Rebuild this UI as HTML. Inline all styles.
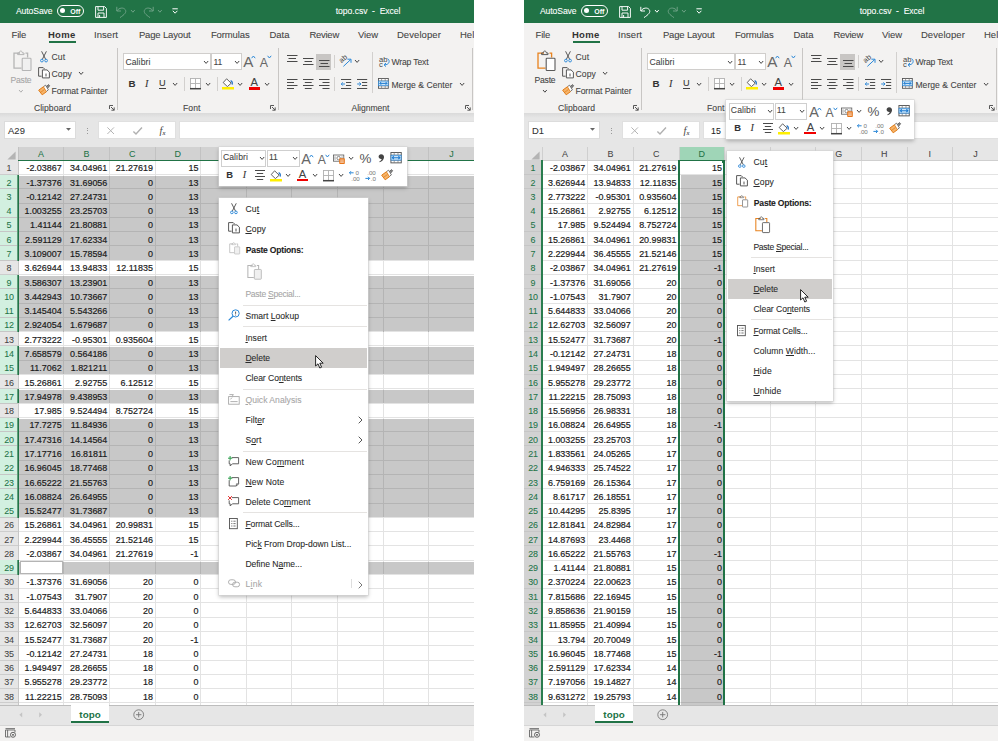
<!DOCTYPE html>
<html lang="en"><head><meta charset="utf-8"><title>topo.csv - Excel</title>
<style>
html,body{margin:0;padding:0;background:#fff}
body{width:999px;height:741px;overflow:hidden;position:relative;font-family:'Liberation Sans',sans-serif;color:#444}
.win{position:absolute;top:0;height:741px;overflow:hidden;background:#fff}
.sec{position:absolute;left:0;top:0;width:474px;height:741px}
.b{position:absolute;display:block}
svg.b{overflow:visible}
.t{position:absolute;white-space:nowrap;line-height:1;display:block;-webkit-text-stroke:0.08px currentColor}
.t u{text-decoration:underline;text-decoration-thickness:0.8px;text-underline-offset:1px}
.c{font-size:8.95px;color:#1a1a1a;-webkit-text-stroke:0.18px currentColor}
.pop{background:#fff;box-shadow:0 0 0 0.6px #d4d4d4,0 1.5px 4px rgba(0,0,0,.28)}
</style></head>
<body>
<div class="win win-left" style="left:0px;width:474px">
<div class="sec titlebar">
<div class="b " style="left:0.00px;top:0.00px;width:475.00px;height:23.00px;background:#217346"></div>
<span class="t" style="top:7.47px;font-size:8.60px;color:#fff;letter-spacing:-0.094px;left:15.94px">AutoSave</span>
<div class="b " style="left:57.00px;top:5.00px;width:27.00px;height:11.60px;border:1px solid #fff;border-radius:6px;box-sizing:border-box"></div>
<div class="b " style="left:60.20px;top:8.40px;width:5.00px;height:5.00px;background:#fff;border-radius:50%"></div>
<span class="t" style="top:7.92px;font-size:7.00px;color:#fff;font-weight:bold;-webkit-text-stroke:0px currentColor;letter-spacing:-0.090px;left:70.34px">Off</span>
<svg class="b" style="left:94.80px;top:5.90px;" width="12" height="12" viewBox="0 0 12 12"><path d="M0.6 0.6 H9.6 L11.4 2.4 V11.4 H0.6 Z M3 0.6 V4.2 H8.6 V0.6 M3 11.4 V7 H9 V11.4 M4.6 11.4 V9" fill="none" stroke="#fff" stroke-width="0.95"/></svg>
<svg class="b" style="left:115.80px;top:6.40px;" width="11" height="12" viewBox="0 0 11 12"><path d="M0.8 0.8 V5 H5 M0.9 4.9 C3.2 1.6 7.4 1.2 9.2 3.6 C11 6.2 8.4 8.6 4 11.6" fill="none" stroke="#6ea286" stroke-width="1"/></svg>
<svg class="b" style="left:129.60px;top:8.80px;" width="5.8" height="4.2" viewBox="0 0 5.8 4.2"><path d="M1 1 L2.9 3.2 L4.8 1" fill="none" stroke="#6ea286" stroke-width="1"/></svg>
<svg class="b" style="left:143.20px;top:6.40px;" width="11" height="12" viewBox="0 0 11 12"><path d="M10.2 0.8 V5 H6 M10.1 4.9 C7.8 1.6 3.6 1.2 1.8 3.6 C0 6.2 2.6 8.6 7 11.6" fill="none" stroke="#6ea286" stroke-width="1"/></svg>
<svg class="b" style="left:156.60px;top:8.80px;" width="5.8" height="4.2" viewBox="0 0 5.8 4.2"><path d="M1 1 L2.9 3.2 L4.8 1" fill="none" stroke="#6ea286" stroke-width="1"/></svg>
<svg class="b" style="left:172.20px;top:8.40px;" width="6.4" height="6.4" viewBox="0 0 6.4 6.4"><path d="M0.4 0.8 H5.8" stroke="#fff" stroke-width="1"/><path d="M0.8 2.8 L3.1 5.2 L5.4 2.8" fill="none" stroke="#fff" stroke-width="1"/></svg>
<span class="t" style="top:7.47px;font-size:8.60px;color:#fff;letter-spacing:-0.039px;left:335.74px">topo.csv&nbsp; -&nbsp; Excel</span>
</div>
<div class="sec ribbon">
<div class="b " style="left:0.00px;top:23.00px;width:475.00px;height:90.00px;background:#f3f2f1"></div>
<span class="t" style="top:30.21px;font-size:9.50px;letter-spacing:-0.218px;left:11.58px">File</span>
<span class="t" style="top:30.21px;font-size:9.50px;letter-spacing:0.029px;left:94.08px">Insert</span>
<span class="t" style="top:30.21px;font-size:9.50px;letter-spacing:-0.156px;left:138.88px">Page Layout</span>
<span class="t" style="top:30.21px;font-size:9.50px;letter-spacing:-0.119px;left:210.88px">Formulas</span>
<span class="t" style="top:30.21px;font-size:9.50px;letter-spacing:0.015px;left:269.38px">Data</span>
<span class="t" style="top:30.21px;font-size:9.50px;letter-spacing:-0.253px;left:309.38px">Review</span>
<span class="t" style="top:30.21px;font-size:9.50px;letter-spacing:-0.070px;left:357.88px">View</span>
<span class="t" style="top:30.21px;font-size:9.50px;letter-spacing:0.092px;left:396.88px">Developer</span>
<span class="t" style="top:30.21px;font-size:9.50px;left:460.00px">Help</span>
<span class="t" style="top:30.21px;font-size:9.50px;color:#333;font-weight:bold;-webkit-text-stroke:0px currentColor;letter-spacing:0.308px;left:47.88px">Home</span>
<div class="b " style="left:48.50px;top:40.80px;width:27.00px;height:2.60px;background:#217346"></div>
<svg class="b" style="left:13.00px;top:50.40px;" width="19" height="21.5" viewBox="0 0 19 21.5"><path d="M7 3.2 H1 V18.2 H8.5" fill="none" stroke="#b5b5b5" stroke-width="1.3"/><path d="M12.5 3.2 H14.6 V7.5" fill="none" stroke="#b5b5b5" stroke-width="1.3"/><path d="M4.6 4.6 V3 H6.2 C6.2 0.4 9.4 0.4 9.4 3 H11 V4.6 Z" fill="none" stroke="#b5b5b5" stroke-width="1"/><rect x="9.2" y="8.2" width="8.8" height="12.3" rx="0.8" fill="#f0f0f0" stroke="#b5b5b5" stroke-width="1.1"/></svg>
<span class="t" style="top:75.77px;font-size:8.60px;color:#a6a6a6;letter-spacing:-0.190px;left:10.44px">Paste</span>
<svg class="b" style="left:17.60px;top:88.60px;" width="5.8" height="4.2" viewBox="0 0 5.8 4.2"><path d="M1 1 L2.9 3.2 L4.8 1" fill="none" stroke="#b0b0b0" stroke-width="1"/></svg>
<svg class="b" style="left:39.50px;top:50.50px;" width="8" height="11.5" viewBox="0 0 8 11.5"><path d="M1.6 0.3 L5.6 8.2 M6.4 0.3 L2.4 8.2" stroke="#505050" stroke-width="0.95" fill="none"/><circle cx="1.9" cy="9.6" r="1.35" fill="none" stroke="#2b88d8" stroke-width="0.95"/><circle cx="6.1" cy="9.6" r="1.35" fill="none" stroke="#2b88d8" stroke-width="0.95"/></svg>
<span class="t" style="top:52.67px;font-size:8.60px;letter-spacing:0.219px;left:51.44px">Cut</span>
<svg class="b" style="left:37.50px;top:67.00px;" width="12" height="11.5" viewBox="0 0 12 11.5"><path d="M3.6 9.2 H0.6 V0.6 H5.2 L6.6 2.0" fill="none" stroke="#505050" stroke-width="0.95"/><path d="M4.4 2.9 H9.0 L11.4 5.2 V10.9 H4.4 Z" fill="#fff" stroke="#505050" stroke-width="0.95"/><path d="M7 7.2 H9 M7 8.8 H9" stroke="#505050" stroke-width="0.7"/></svg>
<span class="t" style="top:70.17px;font-size:8.60px;letter-spacing:0.117px;left:51.44px">Copy</span>
<svg class="b" style="left:78.00px;top:70.80px;" width="6.2" height="4.4" viewBox="0 0 6.2 4.4"><path d="M1 1 L3.1 3.4 L5.2 1" fill="none" stroke="#444" stroke-width="1"/></svg>
<svg class="b" style="left:37.80px;top:83.80px;" width="12" height="11.5" viewBox="0 0 12 11.5"><path d="M0.7 6.2 L5.6 2.6 L8.6 7.6 L4.2 10.8 Z" fill="#f6b46a" stroke="#e07a14" stroke-width="1" stroke-linejoin="round"/><path d="M2.6 8.4 L6.6 5.4" stroke="#e07a14" stroke-width="0.7"/><path d="M5.8 2.4 L7.6 1.2 L10.4 5.8 L8.6 7.2" fill="#fff" stroke="#555" stroke-width="0.8"/><path d="M8.4 2.4 L10.6 0.6 L11.6 1.8 L9.6 4.2" fill="#888" stroke="#555" stroke-width="0.8"/></svg>
<span class="t" style="top:86.77px;font-size:8.60px;letter-spacing:-0.058px;left:51.44px">Format Painter</span>
<span class="t" style="top:103.87px;font-size:8.60px;letter-spacing:0.026px;left:33.94px">Clipboard</span>
<svg class="b" style="left:109.00px;top:105.00px;" width="5.8" height="5.8" viewBox="0 0 5.8 5.8"><path d="M0.5 4 V0.5 H4" fill="none" stroke="#555" stroke-width="1"/><path d="M2 2 L5.2 5.2 M5.2 2.4 V5.2 H2.4" fill="none" stroke="#555" stroke-width="1"/></svg>
<div class="b " style="left:117.00px;top:48.00px;width:1.00px;height:62.00px;background:#c8c6c4"></div>
<div class="b " style="left:123.00px;top:53.00px;width:87.50px;height:16.60px;background:#fff;border:1px solid #d0cecc;box-sizing:border-box"></div>
<div class="b " style="left:211.20px;top:53.00px;width:30.40px;height:16.60px;background:#fff;border:1px solid #d0cecc;box-sizing:border-box"></div>
<span class="t" style="top:57.87px;font-size:8.60px;letter-spacing:0.096px;left:125.44px">Calibri</span>
<svg class="b" style="left:203.00px;top:60.00px;" width="6.2" height="4.4" viewBox="0 0 6.2 4.4"><path d="M1 1 L3.1 3.4 L5.2 1" fill="none" stroke="#444" stroke-width="1"/></svg>
<span class="t" style="top:57.87px;font-size:8.60px;left:213.40px">11</span>
<svg class="b" style="left:234.00px;top:60.00px;" width="6.2" height="4.4" viewBox="0 0 6.2 4.4"><path d="M1 1 L3.1 3.4 L5.2 1" fill="none" stroke="#444" stroke-width="1"/></svg>
<span class="t" style="top:54.48px;font-size:15.20px;color:#666;-webkit-text-stroke:0px currentColor;left:243.30px">A</span>
<svg class="b" style="left:251.00px;top:55.40px;" width="5" height="4" viewBox="0 0 5 4"><path d="M0.6 3.2 L2.4 1 L4.2 3.2" fill="none" stroke="#2b88d8" stroke-width="1"/></svg>
<span class="t" style="top:57.05px;font-size:12.40px;color:#666;-webkit-text-stroke:0px currentColor;left:259.80px">A</span>
<svg class="b" style="left:267.00px;top:55.40px;" width="5" height="4" viewBox="0 0 5 4"><path d="M0.6 0.8 L2.4 3 L4.2 0.8" fill="none" stroke="#2b88d8" stroke-width="1"/></svg>
<span class="t" style="top:78.75px;font-size:9.80px;color:#333;font-weight:bold;left:128.50px">B</span>
<span class="t" style="top:78.52px;font-size:10.20px;color:#333;font-style:italic;font-family:'Liberation Serif',serif;left:145.00px">I</span>
<span class="t" style="top:79.06px;font-size:9.20px;color:#333;left:159.00px">U</span>
<div class="b " style="left:159.00px;top:87.60px;width:6.60px;height:0.90px;background:#444"></div>
<svg class="b" style="left:172.00px;top:82.20px;" width="6.2" height="4.4" viewBox="0 0 6.2 4.4"><path d="M1 1 L3.1 3.4 L5.2 1" fill="none" stroke="#444" stroke-width="1"/></svg>
<div class="b " style="left:184.00px;top:77.00px;width:1.00px;height:14.00px;background:#d2d0ce"></div>
<svg class="b" style="left:189.50px;top:78.00px;" width="11" height="11.5" viewBox="0 0 11 11.5"><rect x="0.5" y="0.5" width="10" height="10" fill="#fff" stroke="#b0b0b0" stroke-width="0.9"/><path d="M5.5 0.5 V10.5 M0.5 5.5 H10.5" stroke="#b0b0b0" stroke-width="0.9"/><path d="M0 10.7 H11" stroke="#444" stroke-width="1.5"/></svg>
<svg class="b" style="left:204.60px;top:82.20px;" width="6.2" height="4.4" viewBox="0 0 6.2 4.4"><path d="M1 1 L3.1 3.4 L5.2 1" fill="none" stroke="#444" stroke-width="1"/></svg>
<div class="b " style="left:217.00px;top:77.00px;width:1.00px;height:14.00px;background:#d2d0ce"></div>
<svg class="b" style="left:222.20px;top:78.00px;" width="12" height="11.5" viewBox="0 0 12 11.5"><path d="M4.6 0.8 L9.2 5.2 L5.4 8.6 L1.2 4.6 Z" fill="#fff" stroke="#505050" stroke-width="0.9"/><path d="M8.6 2.6 C10.2 3.2 10.6 5 10.2 6.6" fill="none" stroke="#2b78c8" stroke-width="1.2"/><rect x="0" y="9" width="12" height="2.5" fill="#ffef00"/></svg>
<svg class="b" style="left:237.20px;top:82.20px;" width="6.2" height="4.4" viewBox="0 0 6.2 4.4"><path d="M1 1 L3.1 3.4 L5.2 1" fill="none" stroke="#444" stroke-width="1"/></svg>
<span class="t" style="top:77.07px;font-size:11.20px;left:250.60px">A</span>
<div class="b " style="left:248.50px;top:87.00px;width:11.60px;height:2.60px;background:#f00000"></div>
<svg class="b" style="left:264.00px;top:82.20px;" width="6.2" height="4.4" viewBox="0 0 6.2 4.4"><path d="M1 1 L3.1 3.4 L5.2 1" fill="none" stroke="#444" stroke-width="1"/></svg>
<span class="t" style="top:103.87px;font-size:8.60px;letter-spacing:0.082px;left:182.94px">Font</span>
<svg class="b" style="left:270.00px;top:105.00px;" width="5.8" height="5.8" viewBox="0 0 5.8 5.8"><path d="M0.5 4 V0.5 H4" fill="none" stroke="#555" stroke-width="1"/><path d="M2 2 L5.2 5.2 M5.2 2.4 V5.2 H2.4" fill="none" stroke="#555" stroke-width="1"/></svg>
<div class="b " style="left:278.00px;top:48.00px;width:1.00px;height:62.00px;background:#c8c6c4"></div>
<svg class="b" style="left:287.00px;top:55.00px;" width="12" height="12" viewBox="0 0 12 12"><path d="M0 0.5 H10.5 M1.5 3.5 H9 M0 6.5 H10.5" stroke="#4a4a4a" stroke-width="1" fill="none"/></svg>
<svg class="b" style="left:303.00px;top:58.00px;" width="12" height="12" viewBox="0 0 12 12"><path d="M0 0.5 H10.5 M1.5 3.5 H9 M0 6.5 H10.5" stroke="#4a4a4a" stroke-width="1" fill="none"/></svg>
<div class="b " style="left:316.00px;top:53.50px;width:15.40px;height:16.00px;background:#c8c6c4"></div>
<svg class="b" style="left:318.50px;top:60.00px;" width="12" height="12" viewBox="0 0 12 12"><path d="M0 0.5 H10.5 M1.5 3.5 H9 M0 6.5 H10.5" stroke="#4a4a4a" stroke-width="1" fill="none"/></svg>
<div class="b " style="left:334.00px;top:55.00px;width:1.00px;height:13.00px;background:#d2d0ce"></div>
<svg class="b" style="left:340.00px;top:55.40px;" width="12.5" height="12" viewBox="0 0 12.5 12"><text x="0" y="0" font-size="7.4" font-family="Liberation Sans,sans-serif" fill="#444" transform="translate(1.6 8.2) rotate(-42)">ab</text><path d="M3.4 11.4 L10.6 4.6 M7.4 4.2 H11 V7.8" fill="none" stroke="#2b88d8" stroke-width="1"/></svg>
<svg class="b" style="left:354.00px;top:59.40px;" width="6.2" height="4.4" viewBox="0 0 6.2 4.4"><path d="M1 1 L3.1 3.4 L5.2 1" fill="none" stroke="#444" stroke-width="1"/></svg>
<svg class="b" style="left:287.00px;top:79.00px;" width="12" height="12" viewBox="0 0 12 12"><path d="M0 0.5 H10.5 M0 3.5 H7 M0 6.5 H10.5 M0 9.5 H7" stroke="#4a4a4a" stroke-width="1" fill="none"/></svg>
<svg class="b" style="left:303.00px;top:79.00px;" width="12" height="12" viewBox="0 0 12 12"><path d="M0 0.5 H10.5 M1.8 3.5 H8.7 M0 6.5 H10.5 M1.8 9.5 H8.7" stroke="#4a4a4a" stroke-width="1" fill="none"/></svg>
<svg class="b" style="left:318.50px;top:79.00px;" width="12" height="12" viewBox="0 0 12 12"><path d="M0 0.5 H10.5 M3.5 3.5 H10.5 M0 6.5 H10.5 M3.5 9.5 H10.5" stroke="#4a4a4a" stroke-width="1" fill="none"/></svg>
<div class="b " style="left:334.00px;top:77.00px;width:1.00px;height:14.00px;background:#d2d0ce"></div>
<svg class="b" style="left:340.50px;top:79.00px;" width="10.6" height="10.6" viewBox="0 0 10.6 10.6"><path d="M0 0.5 H10.2 M5 3.5 H10.2 M5 6.5 H10.2 M0 9.5 H10.2" stroke="#4a4a4a" stroke-width="1" fill="none"/><path d="M0.4 5 H4 M1.8 3.4 L0.2 5 L1.8 6.6" fill="none" stroke="#2b88d8" stroke-width="1"/></svg>
<svg class="b" style="left:356.50px;top:79.00px;" width="10.6" height="10.6" viewBox="0 0 10.6 10.6"><path d="M0 0.5 H10.2 M5 3.5 H10.2 M5 6.5 H10.2 M0 9.5 H10.2" stroke="#4a4a4a" stroke-width="1" fill="none"/><path d="M0.2 5 H3.8 M2.4 3.4 L4 5 L2.4 6.6" fill="none" stroke="#2b88d8" stroke-width="1"/></svg>
<div class="b " style="left:372.00px;top:52.00px;width:1.00px;height:41.00px;background:#d2d0ce"></div>
<svg class="b" style="left:377.60px;top:55.60px;" width="12.5" height="11.5" viewBox="0 0 12.5 11.5"><text x="1.0" y="5.8" font-size="7.6" font-family="Liberation Sans,sans-serif" fill="#444">ab</text><text x="1.0" y="11.2" font-size="7.6" font-family="Liberation Sans,sans-serif" fill="#444">c</text><path d="M9.6 2.6 C12.4 4.4 11.4 9 6.4 8.8 M8 7 L6 8.8 L8 10.6" fill="none" stroke="#2b88d8" stroke-width="1"/></svg>
<span class="t" style="top:58.27px;font-size:8.60px;letter-spacing:-0.149px;left:391.44px">Wrap Text</span>
<svg class="b" style="left:378.00px;top:78.40px;" width="10.8" height="10.8" viewBox="0 0 10.8 10.8"><rect x="0.5" y="0.5" width="9.8" height="9.8" fill="#fff" stroke="#555" stroke-width="0.9"/><path d="M0.5 2.9 H10.3 M0.5 7.9 H10.3 M3.6 0.5 V2.9 M7.2 0.5 V2.9 M3.6 7.9 V10.3 M7.2 7.9 V10.3" stroke="#777" stroke-width="0.7"/><rect x="0.6" y="3.1" width="9.6" height="4.6" fill="#cfe6f8" stroke="#2b88d8" stroke-width="0.7"/><path d="M1.8 5.4 H9 M3.2 4 L1.8 5.4 L3.2 6.8 M7.6 4 L9 5.4 L7.6 6.8" fill="none" stroke="#1f7bd0" stroke-width="1"/></svg>
<span class="t" style="top:80.77px;font-size:8.60px;letter-spacing:0.026px;left:391.44px">Merge &amp; Center</span>
<svg class="b" style="left:458.60px;top:82.20px;" width="6.2" height="4.4" viewBox="0 0 6.2 4.4"><path d="M1 1 L3.1 3.4 L5.2 1" fill="none" stroke="#444" stroke-width="1"/></svg>
<span class="t" style="top:103.87px;font-size:8.60px;letter-spacing:-0.021px;left:351.44px">Alignment</span>
<svg class="b" style="left:465.00px;top:105.00px;" width="5.8" height="5.8" viewBox="0 0 5.8 5.8"><path d="M0.5 4 V0.5 H4" fill="none" stroke="#555" stroke-width="1"/><path d="M2 2 L5.2 5.2 M5.2 2.4 V5.2 H2.4" fill="none" stroke="#555" stroke-width="1"/></svg>
<div class="b " style="left:472.00px;top:48.00px;width:1.00px;height:62.00px;background:#c8c6c4"></div>
</div>
<div class="sec formulabar">
<div class="b " style="left:0.00px;top:113.00px;width:475.00px;height:5.00px;background:linear-gradient(#dadada,#e6e6e6)"></div>
<div class="b " style="left:0.00px;top:118.00px;width:475.00px;height:29.50px;background:#e6e6e6"></div>
<div class="b " style="left:3.50px;top:121.30px;width:72.50px;height:18.20px;background:#fff;border:1px solid #dcdcdc;box-sizing:border-box"></div>
<span class="t" style="top:126.39px;font-size:9.40px;color:#333;letter-spacing:0.147px;left:7.89px">A29</span>
<svg class="b" style="left:66.30px;top:128.40px;" width="5" height="3" viewBox="0 0 5 3"><path d="M0 0 H5 L2.5 2.8 Z" fill="#666"/></svg>
<div class="b " style="left:86.60px;top:127.60px;width:1.00px;height:1.00px;background:#999"></div>
<div class="b " style="left:86.60px;top:130.40px;width:1.00px;height:1.00px;background:#999"></div>
<div class="b " style="left:86.60px;top:133.20px;width:1.00px;height:1.00px;background:#999"></div>
<div class="b " style="left:97.50px;top:121.30px;width:78.30px;height:18.20px;background:#fff;border:1px solid #e0e0e0;box-sizing:border-box"></div>
<svg class="b" style="left:107.40px;top:127.40px;" width="7.4" height="7.4" viewBox="0 0 7.4 7.4"><path d="M0.4 0.4 L7 7 M7 0.4 L0.4 7" stroke="#b4b4b4" stroke-width="1"/></svg>
<svg class="b" style="left:133.00px;top:127.20px;" width="9.4" height="7.6" viewBox="0 0 9.4 7.6"><path d="M0.4 4.4 L3 7 L9 0.5" fill="none" stroke="#b0b0b0" stroke-width="1.4"/></svg>
<span class="t" style="top:125.75px;font-size:10.40px;font-family:'Liberation Serif',serif;-webkit-text-stroke:0px currentColor;left:159.40px"><i>f</i></span>
<span class="t" style="top:129.96px;font-size:6.60px;font-family:'Liberation Serif',serif;-webkit-text-stroke:0.1px currentColor;left:162.60px"><i>x</i></span>
<div class="b " style="left:178.50px;top:121.30px;width:300.00px;height:18.20px;background:#fff;border:1px solid #e0e0e0;box-sizing:border-box"></div>
</div>
<div class="sec grid">
<div class="b " style="left:0.00px;top:147.00px;width:475.00px;height:558.00px;background:#fff"></div>
<div class="b " style="left:19.20px;top:176.08px;width:475.00px;height:84.18px;background:#c8c8c8"></div>
<div class="b " style="left:19.20px;top:276.04px;width:475.00px;height:55.62px;background:#c8c8c8"></div>
<div class="b " style="left:19.20px;top:347.44px;width:475.00px;height:27.06px;background:#c8c8c8"></div>
<div class="b " style="left:19.20px;top:390.28px;width:475.00px;height:12.78px;background:#c8c8c8"></div>
<div class="b " style="left:19.20px;top:418.84px;width:475.00px;height:98.46px;background:#c8c8c8"></div>
<div class="b " style="left:19.20px;top:561.64px;width:475.00px;height:12.78px;background:#c8c8c8"></div>
<div class="b " style="left:63.30px;top:161.00px;width:1.00px;height:544.00px;background:#e3e3e3"></div>
<div class="b " style="left:108.90px;top:161.00px;width:1.00px;height:544.00px;background:#e3e3e3"></div>
<div class="b " style="left:154.50px;top:161.00px;width:1.00px;height:544.00px;background:#e3e3e3"></div>
<div class="b " style="left:200.10px;top:161.00px;width:1.00px;height:544.00px;background:#e3e3e3"></div>
<div class="b " style="left:245.70px;top:161.00px;width:1.00px;height:544.00px;background:#e3e3e3"></div>
<div class="b " style="left:291.30px;top:161.00px;width:1.00px;height:544.00px;background:#e3e3e3"></div>
<div class="b " style="left:336.90px;top:161.00px;width:1.00px;height:544.00px;background:#e3e3e3"></div>
<div class="b " style="left:382.50px;top:161.00px;width:1.00px;height:544.00px;background:#e3e3e3"></div>
<div class="b " style="left:428.10px;top:161.00px;width:1.00px;height:544.00px;background:#e3e3e3"></div>
<div class="b " style="left:473.70px;top:161.00px;width:1.00px;height:544.00px;background:#e3e3e3"></div>
<div class="b " style="left:18.20px;top:174.08px;width:475.00px;height:1.00px;background:#e3e3e3"></div>
<div class="b " style="left:18.20px;top:188.36px;width:475.00px;height:1.00px;background:#e3e3e3"></div>
<div class="b " style="left:18.20px;top:202.64px;width:475.00px;height:1.00px;background:#e3e3e3"></div>
<div class="b " style="left:18.20px;top:216.92px;width:475.00px;height:1.00px;background:#e3e3e3"></div>
<div class="b " style="left:18.20px;top:231.20px;width:475.00px;height:1.00px;background:#e3e3e3"></div>
<div class="b " style="left:18.20px;top:245.48px;width:475.00px;height:1.00px;background:#e3e3e3"></div>
<div class="b " style="left:18.20px;top:259.76px;width:475.00px;height:1.00px;background:#e3e3e3"></div>
<div class="b " style="left:18.20px;top:274.04px;width:475.00px;height:1.00px;background:#e3e3e3"></div>
<div class="b " style="left:18.20px;top:288.32px;width:475.00px;height:1.00px;background:#e3e3e3"></div>
<div class="b " style="left:18.20px;top:302.60px;width:475.00px;height:1.00px;background:#e3e3e3"></div>
<div class="b " style="left:18.20px;top:316.88px;width:475.00px;height:1.00px;background:#e3e3e3"></div>
<div class="b " style="left:18.20px;top:331.16px;width:475.00px;height:1.00px;background:#e3e3e3"></div>
<div class="b " style="left:18.20px;top:345.44px;width:475.00px;height:1.00px;background:#e3e3e3"></div>
<div class="b " style="left:18.20px;top:359.72px;width:475.00px;height:1.00px;background:#e3e3e3"></div>
<div class="b " style="left:18.20px;top:374.00px;width:475.00px;height:1.00px;background:#e3e3e3"></div>
<div class="b " style="left:18.20px;top:388.28px;width:475.00px;height:1.00px;background:#e3e3e3"></div>
<div class="b " style="left:18.20px;top:402.56px;width:475.00px;height:1.00px;background:#e3e3e3"></div>
<div class="b " style="left:18.20px;top:416.84px;width:475.00px;height:1.00px;background:#e3e3e3"></div>
<div class="b " style="left:18.20px;top:431.12px;width:475.00px;height:1.00px;background:#e3e3e3"></div>
<div class="b " style="left:18.20px;top:445.40px;width:475.00px;height:1.00px;background:#e3e3e3"></div>
<div class="b " style="left:18.20px;top:459.68px;width:475.00px;height:1.00px;background:#e3e3e3"></div>
<div class="b " style="left:18.20px;top:473.96px;width:475.00px;height:1.00px;background:#e3e3e3"></div>
<div class="b " style="left:18.20px;top:488.24px;width:475.00px;height:1.00px;background:#e3e3e3"></div>
<div class="b " style="left:18.20px;top:502.52px;width:475.00px;height:1.00px;background:#e3e3e3"></div>
<div class="b " style="left:18.20px;top:516.80px;width:475.00px;height:1.00px;background:#e3e3e3"></div>
<div class="b " style="left:18.20px;top:531.08px;width:475.00px;height:1.00px;background:#e3e3e3"></div>
<div class="b " style="left:18.20px;top:545.36px;width:475.00px;height:1.00px;background:#e3e3e3"></div>
<div class="b " style="left:18.20px;top:559.64px;width:475.00px;height:1.00px;background:#e3e3e3"></div>
<div class="b " style="left:18.20px;top:573.92px;width:475.00px;height:1.00px;background:#e3e3e3"></div>
<div class="b " style="left:18.20px;top:588.20px;width:475.00px;height:1.00px;background:#e3e3e3"></div>
<div class="b " style="left:18.20px;top:602.48px;width:475.00px;height:1.00px;background:#e3e3e3"></div>
<div class="b " style="left:18.20px;top:616.76px;width:475.00px;height:1.00px;background:#e3e3e3"></div>
<div class="b " style="left:18.20px;top:631.04px;width:475.00px;height:1.00px;background:#e3e3e3"></div>
<div class="b " style="left:18.20px;top:645.32px;width:475.00px;height:1.00px;background:#e3e3e3"></div>
<div class="b " style="left:18.20px;top:659.60px;width:475.00px;height:1.00px;background:#e3e3e3"></div>
<div class="b " style="left:18.20px;top:673.88px;width:475.00px;height:1.00px;background:#e3e3e3"></div>
<div class="b " style="left:18.20px;top:688.16px;width:475.00px;height:1.00px;background:#e3e3e3"></div>
<div class="b " style="left:18.20px;top:702.44px;width:475.00px;height:1.00px;background:#e3e3e3"></div>
<div class="b " style="left:18.20px;top:716.72px;width:475.00px;height:1.00px;background:#e3e3e3"></div>
<div class="b " style="left:63.30px;top:176.08px;width:1.00px;height:84.18px;background:#b4b4b4"></div>
<div class="b " style="left:108.90px;top:176.08px;width:1.00px;height:84.18px;background:#b4b4b4"></div>
<div class="b " style="left:154.50px;top:176.08px;width:1.00px;height:84.18px;background:#b4b4b4"></div>
<div class="b " style="left:200.10px;top:176.08px;width:1.00px;height:84.18px;background:#b4b4b4"></div>
<div class="b " style="left:245.70px;top:176.08px;width:1.00px;height:84.18px;background:#b4b4b4"></div>
<div class="b " style="left:291.30px;top:176.08px;width:1.00px;height:84.18px;background:#b4b4b4"></div>
<div class="b " style="left:336.90px;top:176.08px;width:1.00px;height:84.18px;background:#b4b4b4"></div>
<div class="b " style="left:382.50px;top:176.08px;width:1.00px;height:84.18px;background:#b4b4b4"></div>
<div class="b " style="left:428.10px;top:176.08px;width:1.00px;height:84.18px;background:#b4b4b4"></div>
<div class="b " style="left:473.70px;top:176.08px;width:1.00px;height:84.18px;background:#b4b4b4"></div>
<div class="b " style="left:19.20px;top:188.36px;width:475.00px;height:1.00px;background:#b4b4b4"></div>
<div class="b " style="left:19.20px;top:202.64px;width:475.00px;height:1.00px;background:#b4b4b4"></div>
<div class="b " style="left:19.20px;top:216.92px;width:475.00px;height:1.00px;background:#b4b4b4"></div>
<div class="b " style="left:19.20px;top:231.20px;width:475.00px;height:1.00px;background:#b4b4b4"></div>
<div class="b " style="left:19.20px;top:245.48px;width:475.00px;height:1.00px;background:#b4b4b4"></div>
<div class="b " style="left:63.30px;top:276.04px;width:1.00px;height:55.62px;background:#b4b4b4"></div>
<div class="b " style="left:108.90px;top:276.04px;width:1.00px;height:55.62px;background:#b4b4b4"></div>
<div class="b " style="left:154.50px;top:276.04px;width:1.00px;height:55.62px;background:#b4b4b4"></div>
<div class="b " style="left:200.10px;top:276.04px;width:1.00px;height:55.62px;background:#b4b4b4"></div>
<div class="b " style="left:245.70px;top:276.04px;width:1.00px;height:55.62px;background:#b4b4b4"></div>
<div class="b " style="left:291.30px;top:276.04px;width:1.00px;height:55.62px;background:#b4b4b4"></div>
<div class="b " style="left:336.90px;top:276.04px;width:1.00px;height:55.62px;background:#b4b4b4"></div>
<div class="b " style="left:382.50px;top:276.04px;width:1.00px;height:55.62px;background:#b4b4b4"></div>
<div class="b " style="left:428.10px;top:276.04px;width:1.00px;height:55.62px;background:#b4b4b4"></div>
<div class="b " style="left:473.70px;top:276.04px;width:1.00px;height:55.62px;background:#b4b4b4"></div>
<div class="b " style="left:19.20px;top:288.32px;width:475.00px;height:1.00px;background:#b4b4b4"></div>
<div class="b " style="left:19.20px;top:302.60px;width:475.00px;height:1.00px;background:#b4b4b4"></div>
<div class="b " style="left:19.20px;top:316.88px;width:475.00px;height:1.00px;background:#b4b4b4"></div>
<div class="b " style="left:63.30px;top:347.44px;width:1.00px;height:27.06px;background:#b4b4b4"></div>
<div class="b " style="left:108.90px;top:347.44px;width:1.00px;height:27.06px;background:#b4b4b4"></div>
<div class="b " style="left:154.50px;top:347.44px;width:1.00px;height:27.06px;background:#b4b4b4"></div>
<div class="b " style="left:200.10px;top:347.44px;width:1.00px;height:27.06px;background:#b4b4b4"></div>
<div class="b " style="left:245.70px;top:347.44px;width:1.00px;height:27.06px;background:#b4b4b4"></div>
<div class="b " style="left:291.30px;top:347.44px;width:1.00px;height:27.06px;background:#b4b4b4"></div>
<div class="b " style="left:336.90px;top:347.44px;width:1.00px;height:27.06px;background:#b4b4b4"></div>
<div class="b " style="left:382.50px;top:347.44px;width:1.00px;height:27.06px;background:#b4b4b4"></div>
<div class="b " style="left:428.10px;top:347.44px;width:1.00px;height:27.06px;background:#b4b4b4"></div>
<div class="b " style="left:473.70px;top:347.44px;width:1.00px;height:27.06px;background:#b4b4b4"></div>
<div class="b " style="left:19.20px;top:359.72px;width:475.00px;height:1.00px;background:#b4b4b4"></div>
<div class="b " style="left:63.30px;top:390.28px;width:1.00px;height:12.78px;background:#b4b4b4"></div>
<div class="b " style="left:108.90px;top:390.28px;width:1.00px;height:12.78px;background:#b4b4b4"></div>
<div class="b " style="left:154.50px;top:390.28px;width:1.00px;height:12.78px;background:#b4b4b4"></div>
<div class="b " style="left:200.10px;top:390.28px;width:1.00px;height:12.78px;background:#b4b4b4"></div>
<div class="b " style="left:245.70px;top:390.28px;width:1.00px;height:12.78px;background:#b4b4b4"></div>
<div class="b " style="left:291.30px;top:390.28px;width:1.00px;height:12.78px;background:#b4b4b4"></div>
<div class="b " style="left:336.90px;top:390.28px;width:1.00px;height:12.78px;background:#b4b4b4"></div>
<div class="b " style="left:382.50px;top:390.28px;width:1.00px;height:12.78px;background:#b4b4b4"></div>
<div class="b " style="left:428.10px;top:390.28px;width:1.00px;height:12.78px;background:#b4b4b4"></div>
<div class="b " style="left:473.70px;top:390.28px;width:1.00px;height:12.78px;background:#b4b4b4"></div>
<div class="b " style="left:63.30px;top:418.84px;width:1.00px;height:98.46px;background:#b4b4b4"></div>
<div class="b " style="left:108.90px;top:418.84px;width:1.00px;height:98.46px;background:#b4b4b4"></div>
<div class="b " style="left:154.50px;top:418.84px;width:1.00px;height:98.46px;background:#b4b4b4"></div>
<div class="b " style="left:200.10px;top:418.84px;width:1.00px;height:98.46px;background:#b4b4b4"></div>
<div class="b " style="left:245.70px;top:418.84px;width:1.00px;height:98.46px;background:#b4b4b4"></div>
<div class="b " style="left:291.30px;top:418.84px;width:1.00px;height:98.46px;background:#b4b4b4"></div>
<div class="b " style="left:336.90px;top:418.84px;width:1.00px;height:98.46px;background:#b4b4b4"></div>
<div class="b " style="left:382.50px;top:418.84px;width:1.00px;height:98.46px;background:#b4b4b4"></div>
<div class="b " style="left:428.10px;top:418.84px;width:1.00px;height:98.46px;background:#b4b4b4"></div>
<div class="b " style="left:473.70px;top:418.84px;width:1.00px;height:98.46px;background:#b4b4b4"></div>
<div class="b " style="left:19.20px;top:431.12px;width:475.00px;height:1.00px;background:#b4b4b4"></div>
<div class="b " style="left:19.20px;top:445.40px;width:475.00px;height:1.00px;background:#b4b4b4"></div>
<div class="b " style="left:19.20px;top:459.68px;width:475.00px;height:1.00px;background:#b4b4b4"></div>
<div class="b " style="left:19.20px;top:473.96px;width:475.00px;height:1.00px;background:#b4b4b4"></div>
<div class="b " style="left:19.20px;top:488.24px;width:475.00px;height:1.00px;background:#b4b4b4"></div>
<div class="b " style="left:19.20px;top:502.52px;width:475.00px;height:1.00px;background:#b4b4b4"></div>
<div class="b " style="left:63.30px;top:561.64px;width:1.00px;height:12.78px;background:#b4b4b4"></div>
<div class="b " style="left:108.90px;top:561.64px;width:1.00px;height:12.78px;background:#b4b4b4"></div>
<div class="b " style="left:154.50px;top:561.64px;width:1.00px;height:12.78px;background:#b4b4b4"></div>
<div class="b " style="left:200.10px;top:561.64px;width:1.00px;height:12.78px;background:#b4b4b4"></div>
<div class="b " style="left:245.70px;top:561.64px;width:1.00px;height:12.78px;background:#b4b4b4"></div>
<div class="b " style="left:291.30px;top:561.64px;width:1.00px;height:12.78px;background:#b4b4b4"></div>
<div class="b " style="left:336.90px;top:561.64px;width:1.00px;height:12.78px;background:#b4b4b4"></div>
<div class="b " style="left:382.50px;top:561.64px;width:1.00px;height:12.78px;background:#b4b4b4"></div>
<div class="b " style="left:428.10px;top:561.64px;width:1.00px;height:12.78px;background:#b4b4b4"></div>
<div class="b " style="left:473.70px;top:561.64px;width:1.00px;height:12.78px;background:#b4b4b4"></div>
<div class="b " style="left:19.70px;top:561.34px;width:43.60px;height:12.68px;background:#fff;border:1px solid #b4b4b4;box-sizing:border-box"></div>
<div class="b " style="left:0.00px;top:147.00px;width:475.00px;height:13.40px;background:#e6e6e6"></div>
<div class="b " style="left:18.20px;top:147.00px;width:45.60px;height:13.20px;background:#d2d2d2"></div>
<span class="t" style="top:149.77px;font-size:8.95px;color:#217346;-webkit-text-stroke:0.05px currentColor;left:41.00px;width:0;display:flex;justify-content:center">A</span>
<div class="b " style="left:63.80px;top:147.00px;width:45.60px;height:13.20px;background:#d2d2d2"></div>
<span class="t" style="top:149.77px;font-size:8.95px;color:#217346;-webkit-text-stroke:0.05px currentColor;left:86.60px;width:0;display:flex;justify-content:center">B</span>
<div class="b " style="left:109.40px;top:147.00px;width:45.60px;height:13.20px;background:#d2d2d2"></div>
<span class="t" style="top:149.77px;font-size:8.95px;color:#217346;-webkit-text-stroke:0.05px currentColor;left:132.20px;width:0;display:flex;justify-content:center">C</span>
<div class="b " style="left:155.00px;top:147.00px;width:45.60px;height:13.20px;background:#d2d2d2"></div>
<span class="t" style="top:149.77px;font-size:8.95px;color:#217346;-webkit-text-stroke:0.05px currentColor;left:177.80px;width:0;display:flex;justify-content:center">D</span>
<div class="b " style="left:200.60px;top:147.00px;width:45.60px;height:13.20px;background:#d2d2d2"></div>
<span class="t" style="top:149.77px;font-size:8.95px;color:#217346;-webkit-text-stroke:0.05px currentColor;left:223.40px;width:0;display:flex;justify-content:center">E</span>
<div class="b " style="left:246.20px;top:147.00px;width:45.60px;height:13.20px;background:#d2d2d2"></div>
<span class="t" style="top:149.77px;font-size:8.95px;color:#217346;-webkit-text-stroke:0.05px currentColor;left:269.00px;width:0;display:flex;justify-content:center">F</span>
<div class="b " style="left:291.80px;top:147.00px;width:45.60px;height:13.20px;background:#d2d2d2"></div>
<span class="t" style="top:149.77px;font-size:8.95px;color:#217346;-webkit-text-stroke:0.05px currentColor;left:314.60px;width:0;display:flex;justify-content:center">G</span>
<div class="b " style="left:337.40px;top:147.00px;width:45.60px;height:13.20px;background:#d2d2d2"></div>
<span class="t" style="top:149.77px;font-size:8.95px;color:#217346;-webkit-text-stroke:0.05px currentColor;left:360.20px;width:0;display:flex;justify-content:center">H</span>
<div class="b " style="left:383.00px;top:147.00px;width:45.60px;height:13.20px;background:#d2d2d2"></div>
<span class="t" style="top:149.77px;font-size:8.95px;color:#217346;-webkit-text-stroke:0.05px currentColor;left:405.80px;width:0;display:flex;justify-content:center">I</span>
<div class="b " style="left:428.60px;top:147.00px;width:45.60px;height:13.20px;background:#d2d2d2"></div>
<span class="t" style="top:149.77px;font-size:8.95px;color:#217346;-webkit-text-stroke:0.05px currentColor;left:451.40px;width:0;display:flex;justify-content:center">J</span>
<div class="b " style="left:17.70px;top:147.00px;width:1.00px;height:13.00px;background:#c2c2c2"></div>
<div class="b " style="left:63.30px;top:147.00px;width:1.00px;height:13.00px;background:#c2c2c2"></div>
<div class="b " style="left:108.90px;top:147.00px;width:1.00px;height:13.00px;background:#c2c2c2"></div>
<div class="b " style="left:154.50px;top:147.00px;width:1.00px;height:13.00px;background:#c2c2c2"></div>
<div class="b " style="left:200.10px;top:147.00px;width:1.00px;height:13.00px;background:#c2c2c2"></div>
<div class="b " style="left:245.70px;top:147.00px;width:1.00px;height:13.00px;background:#c2c2c2"></div>
<div class="b " style="left:291.30px;top:147.00px;width:1.00px;height:13.00px;background:#c2c2c2"></div>
<div class="b " style="left:336.90px;top:147.00px;width:1.00px;height:13.00px;background:#c2c2c2"></div>
<div class="b " style="left:382.50px;top:147.00px;width:1.00px;height:13.00px;background:#c2c2c2"></div>
<div class="b " style="left:428.10px;top:147.00px;width:1.00px;height:13.00px;background:#c2c2c2"></div>
<div class="b " style="left:473.70px;top:147.00px;width:1.00px;height:13.00px;background:#c2c2c2"></div>
<svg class="b" style="left:6.60px;top:150.60px;" width="9" height="9" viewBox="0 0 9 9"><path d="M8.6 0.4 V8.6 H0.4 Z" fill="#b4b4b4"/></svg>
<div class="b " style="left:18.20px;top:159.70px;width:475.00px;height:1.50px;background:#217346"></div>
<div class="b " style="left:0.00px;top:160.00px;width:18.20px;height:545.50px;background:#e6e6e6"></div>
<div class="b " style="left:0.00px;top:174.08px;width:18.20px;height:1.00px;background:#cdcdcd"></div>
<span class="t" style="top:164.35px;font-size:8.95px;-webkit-text-stroke:0.05px currentColor;left:9.10px;width:0;display:flex;justify-content:center">1</span>
<div class="b " style="left:0.00px;top:174.78px;width:18.20px;height:14.58px;background:#d2f0e0"></div>
<div class="b " style="left:0.00px;top:188.36px;width:18.20px;height:1.00px;background:#c6c6c6"></div>
<span class="t" style="top:178.63px;font-size:8.95px;color:#217346;-webkit-text-stroke:0.05px currentColor;left:9.10px;width:0;display:flex;justify-content:center">2</span>
<div class="b " style="left:0.00px;top:189.06px;width:18.20px;height:14.58px;background:#d2f0e0"></div>
<div class="b " style="left:0.00px;top:202.64px;width:18.20px;height:1.00px;background:#c6c6c6"></div>
<span class="t" style="top:192.91px;font-size:8.95px;color:#217346;-webkit-text-stroke:0.05px currentColor;left:9.10px;width:0;display:flex;justify-content:center">3</span>
<div class="b " style="left:0.00px;top:203.34px;width:18.20px;height:14.58px;background:#d2f0e0"></div>
<div class="b " style="left:0.00px;top:216.92px;width:18.20px;height:1.00px;background:#c6c6c6"></div>
<span class="t" style="top:207.19px;font-size:8.95px;color:#217346;-webkit-text-stroke:0.05px currentColor;left:9.10px;width:0;display:flex;justify-content:center">4</span>
<div class="b " style="left:0.00px;top:217.62px;width:18.20px;height:14.58px;background:#d2f0e0"></div>
<div class="b " style="left:0.00px;top:231.20px;width:18.20px;height:1.00px;background:#c6c6c6"></div>
<span class="t" style="top:221.47px;font-size:8.95px;color:#217346;-webkit-text-stroke:0.05px currentColor;left:9.10px;width:0;display:flex;justify-content:center">5</span>
<div class="b " style="left:0.00px;top:231.90px;width:18.20px;height:14.58px;background:#d2f0e0"></div>
<div class="b " style="left:0.00px;top:245.48px;width:18.20px;height:1.00px;background:#c6c6c6"></div>
<span class="t" style="top:235.75px;font-size:8.95px;color:#217346;-webkit-text-stroke:0.05px currentColor;left:9.10px;width:0;display:flex;justify-content:center">6</span>
<div class="b " style="left:0.00px;top:246.18px;width:18.20px;height:14.58px;background:#d2f0e0"></div>
<div class="b " style="left:0.00px;top:259.76px;width:18.20px;height:1.00px;background:#c6c6c6"></div>
<span class="t" style="top:250.03px;font-size:8.95px;color:#217346;-webkit-text-stroke:0.05px currentColor;left:9.10px;width:0;display:flex;justify-content:center">7</span>
<div class="b " style="left:0.00px;top:274.04px;width:18.20px;height:1.00px;background:#cdcdcd"></div>
<span class="t" style="top:264.31px;font-size:8.95px;-webkit-text-stroke:0.05px currentColor;left:9.10px;width:0;display:flex;justify-content:center">8</span>
<div class="b " style="left:0.00px;top:274.74px;width:18.20px;height:14.58px;background:#d2f0e0"></div>
<div class="b " style="left:0.00px;top:288.32px;width:18.20px;height:1.00px;background:#c6c6c6"></div>
<span class="t" style="top:278.59px;font-size:8.95px;color:#217346;-webkit-text-stroke:0.05px currentColor;left:9.10px;width:0;display:flex;justify-content:center">9</span>
<div class="b " style="left:0.00px;top:289.02px;width:18.20px;height:14.58px;background:#d2f0e0"></div>
<div class="b " style="left:0.00px;top:302.60px;width:18.20px;height:1.00px;background:#c6c6c6"></div>
<span class="t" style="top:292.87px;font-size:8.95px;color:#217346;-webkit-text-stroke:0.05px currentColor;left:9.10px;width:0;display:flex;justify-content:center">10</span>
<div class="b " style="left:0.00px;top:303.30px;width:18.20px;height:14.58px;background:#d2f0e0"></div>
<div class="b " style="left:0.00px;top:316.88px;width:18.20px;height:1.00px;background:#c6c6c6"></div>
<span class="t" style="top:307.15px;font-size:8.95px;color:#217346;-webkit-text-stroke:0.05px currentColor;left:9.10px;width:0;display:flex;justify-content:center">11</span>
<div class="b " style="left:0.00px;top:317.58px;width:18.20px;height:14.58px;background:#d2f0e0"></div>
<div class="b " style="left:0.00px;top:331.16px;width:18.20px;height:1.00px;background:#c6c6c6"></div>
<span class="t" style="top:321.43px;font-size:8.95px;color:#217346;-webkit-text-stroke:0.05px currentColor;left:9.10px;width:0;display:flex;justify-content:center">12</span>
<div class="b " style="left:0.00px;top:345.44px;width:18.20px;height:1.00px;background:#cdcdcd"></div>
<span class="t" style="top:335.71px;font-size:8.95px;-webkit-text-stroke:0.05px currentColor;left:9.10px;width:0;display:flex;justify-content:center">13</span>
<div class="b " style="left:0.00px;top:346.14px;width:18.20px;height:14.58px;background:#d2f0e0"></div>
<div class="b " style="left:0.00px;top:359.72px;width:18.20px;height:1.00px;background:#c6c6c6"></div>
<span class="t" style="top:349.99px;font-size:8.95px;color:#217346;-webkit-text-stroke:0.05px currentColor;left:9.10px;width:0;display:flex;justify-content:center">14</span>
<div class="b " style="left:0.00px;top:360.42px;width:18.20px;height:14.58px;background:#d2f0e0"></div>
<div class="b " style="left:0.00px;top:374.00px;width:18.20px;height:1.00px;background:#c6c6c6"></div>
<span class="t" style="top:364.27px;font-size:8.95px;color:#217346;-webkit-text-stroke:0.05px currentColor;left:9.10px;width:0;display:flex;justify-content:center">15</span>
<div class="b " style="left:0.00px;top:388.28px;width:18.20px;height:1.00px;background:#cdcdcd"></div>
<span class="t" style="top:378.55px;font-size:8.95px;-webkit-text-stroke:0.05px currentColor;left:9.10px;width:0;display:flex;justify-content:center">16</span>
<div class="b " style="left:0.00px;top:388.98px;width:18.20px;height:14.58px;background:#d2f0e0"></div>
<div class="b " style="left:0.00px;top:402.56px;width:18.20px;height:1.00px;background:#c6c6c6"></div>
<span class="t" style="top:392.83px;font-size:8.95px;color:#217346;-webkit-text-stroke:0.05px currentColor;left:9.10px;width:0;display:flex;justify-content:center">17</span>
<div class="b " style="left:0.00px;top:416.84px;width:18.20px;height:1.00px;background:#cdcdcd"></div>
<span class="t" style="top:407.11px;font-size:8.95px;-webkit-text-stroke:0.05px currentColor;left:9.10px;width:0;display:flex;justify-content:center">18</span>
<div class="b " style="left:0.00px;top:417.54px;width:18.20px;height:14.58px;background:#d2f0e0"></div>
<div class="b " style="left:0.00px;top:431.12px;width:18.20px;height:1.00px;background:#c6c6c6"></div>
<span class="t" style="top:421.39px;font-size:8.95px;color:#217346;-webkit-text-stroke:0.05px currentColor;left:9.10px;width:0;display:flex;justify-content:center">19</span>
<div class="b " style="left:0.00px;top:431.82px;width:18.20px;height:14.58px;background:#d2f0e0"></div>
<div class="b " style="left:0.00px;top:445.40px;width:18.20px;height:1.00px;background:#c6c6c6"></div>
<span class="t" style="top:435.67px;font-size:8.95px;color:#217346;-webkit-text-stroke:0.05px currentColor;left:9.10px;width:0;display:flex;justify-content:center">20</span>
<div class="b " style="left:0.00px;top:446.10px;width:18.20px;height:14.58px;background:#d2f0e0"></div>
<div class="b " style="left:0.00px;top:459.68px;width:18.20px;height:1.00px;background:#c6c6c6"></div>
<span class="t" style="top:449.95px;font-size:8.95px;color:#217346;-webkit-text-stroke:0.05px currentColor;left:9.10px;width:0;display:flex;justify-content:center">21</span>
<div class="b " style="left:0.00px;top:460.38px;width:18.20px;height:14.58px;background:#d2f0e0"></div>
<div class="b " style="left:0.00px;top:473.96px;width:18.20px;height:1.00px;background:#c6c6c6"></div>
<span class="t" style="top:464.23px;font-size:8.95px;color:#217346;-webkit-text-stroke:0.05px currentColor;left:9.10px;width:0;display:flex;justify-content:center">22</span>
<div class="b " style="left:0.00px;top:474.66px;width:18.20px;height:14.58px;background:#d2f0e0"></div>
<div class="b " style="left:0.00px;top:488.24px;width:18.20px;height:1.00px;background:#c6c6c6"></div>
<span class="t" style="top:478.51px;font-size:8.95px;color:#217346;-webkit-text-stroke:0.05px currentColor;left:9.10px;width:0;display:flex;justify-content:center">23</span>
<div class="b " style="left:0.00px;top:488.94px;width:18.20px;height:14.58px;background:#d2f0e0"></div>
<div class="b " style="left:0.00px;top:502.52px;width:18.20px;height:1.00px;background:#c6c6c6"></div>
<span class="t" style="top:492.79px;font-size:8.95px;color:#217346;-webkit-text-stroke:0.05px currentColor;left:9.10px;width:0;display:flex;justify-content:center">24</span>
<div class="b " style="left:0.00px;top:503.22px;width:18.20px;height:14.58px;background:#d2f0e0"></div>
<div class="b " style="left:0.00px;top:516.80px;width:18.20px;height:1.00px;background:#c6c6c6"></div>
<span class="t" style="top:507.07px;font-size:8.95px;color:#217346;-webkit-text-stroke:0.05px currentColor;left:9.10px;width:0;display:flex;justify-content:center">25</span>
<div class="b " style="left:0.00px;top:531.08px;width:18.20px;height:1.00px;background:#cdcdcd"></div>
<span class="t" style="top:521.35px;font-size:8.95px;-webkit-text-stroke:0.05px currentColor;left:9.10px;width:0;display:flex;justify-content:center">26</span>
<div class="b " style="left:0.00px;top:545.36px;width:18.20px;height:1.00px;background:#cdcdcd"></div>
<span class="t" style="top:535.63px;font-size:8.95px;-webkit-text-stroke:0.05px currentColor;left:9.10px;width:0;display:flex;justify-content:center">27</span>
<div class="b " style="left:0.00px;top:559.64px;width:18.20px;height:1.00px;background:#cdcdcd"></div>
<span class="t" style="top:549.91px;font-size:8.95px;-webkit-text-stroke:0.05px currentColor;left:9.10px;width:0;display:flex;justify-content:center">28</span>
<div class="b " style="left:0.00px;top:560.34px;width:18.20px;height:14.58px;background:#d2f0e0"></div>
<div class="b " style="left:0.00px;top:573.92px;width:18.20px;height:1.00px;background:#c6c6c6"></div>
<span class="t" style="top:564.19px;font-size:8.95px;color:#217346;-webkit-text-stroke:0.05px currentColor;left:9.10px;width:0;display:flex;justify-content:center">29</span>
<div class="b " style="left:0.00px;top:588.20px;width:18.20px;height:1.00px;background:#cdcdcd"></div>
<span class="t" style="top:578.47px;font-size:8.95px;-webkit-text-stroke:0.05px currentColor;left:9.10px;width:0;display:flex;justify-content:center">30</span>
<div class="b " style="left:0.00px;top:602.48px;width:18.20px;height:1.00px;background:#cdcdcd"></div>
<span class="t" style="top:592.75px;font-size:8.95px;-webkit-text-stroke:0.05px currentColor;left:9.10px;width:0;display:flex;justify-content:center">31</span>
<div class="b " style="left:0.00px;top:616.76px;width:18.20px;height:1.00px;background:#cdcdcd"></div>
<span class="t" style="top:607.03px;font-size:8.95px;-webkit-text-stroke:0.05px currentColor;left:9.10px;width:0;display:flex;justify-content:center">32</span>
<div class="b " style="left:0.00px;top:631.04px;width:18.20px;height:1.00px;background:#cdcdcd"></div>
<span class="t" style="top:621.31px;font-size:8.95px;-webkit-text-stroke:0.05px currentColor;left:9.10px;width:0;display:flex;justify-content:center">33</span>
<div class="b " style="left:0.00px;top:645.32px;width:18.20px;height:1.00px;background:#cdcdcd"></div>
<span class="t" style="top:635.59px;font-size:8.95px;-webkit-text-stroke:0.05px currentColor;left:9.10px;width:0;display:flex;justify-content:center">34</span>
<div class="b " style="left:0.00px;top:659.60px;width:18.20px;height:1.00px;background:#cdcdcd"></div>
<span class="t" style="top:649.87px;font-size:8.95px;-webkit-text-stroke:0.05px currentColor;left:9.10px;width:0;display:flex;justify-content:center">35</span>
<div class="b " style="left:0.00px;top:673.88px;width:18.20px;height:1.00px;background:#cdcdcd"></div>
<span class="t" style="top:664.15px;font-size:8.95px;-webkit-text-stroke:0.05px currentColor;left:9.10px;width:0;display:flex;justify-content:center">36</span>
<div class="b " style="left:0.00px;top:688.16px;width:18.20px;height:1.00px;background:#cdcdcd"></div>
<span class="t" style="top:678.43px;font-size:8.95px;-webkit-text-stroke:0.05px currentColor;left:9.10px;width:0;display:flex;justify-content:center">37</span>
<div class="b " style="left:0.00px;top:702.44px;width:18.20px;height:1.00px;background:#cdcdcd"></div>
<span class="t" style="top:692.71px;font-size:8.95px;-webkit-text-stroke:0.05px currentColor;left:9.10px;width:0;display:flex;justify-content:center">38</span>
<div class="b " style="left:0.00px;top:716.72px;width:18.20px;height:1.00px;background:#cdcdcd"></div>
<div class="b " style="left:17.70px;top:160.50px;width:1.00px;height:545.00px;background:#c6c6c6"></div>
<div class="b " style="left:17.00px;top:174.88px;width:2.00px;height:85.68px;background:linear-gradient(90deg,#5f9f7c 0 50%,#217346 50% 100%)"></div>
<div class="b " style="left:17.00px;top:274.84px;width:2.00px;height:57.12px;background:linear-gradient(90deg,#5f9f7c 0 50%,#217346 50% 100%)"></div>
<div class="b " style="left:17.00px;top:346.24px;width:2.00px;height:28.56px;background:linear-gradient(90deg,#5f9f7c 0 50%,#217346 50% 100%)"></div>
<div class="b " style="left:17.00px;top:389.08px;width:2.00px;height:14.28px;background:linear-gradient(90deg,#5f9f7c 0 50%,#217346 50% 100%)"></div>
<div class="b " style="left:17.00px;top:417.64px;width:2.00px;height:99.96px;background:linear-gradient(90deg,#5f9f7c 0 50%,#217346 50% 100%)"></div>
<div class="b " style="left:17.00px;top:560.44px;width:2.00px;height:14.28px;background:linear-gradient(90deg,#5f9f7c 0 50%,#217346 50% 100%)"></div>
<span class="t c" style="top:164.35px;right:412.30px">-2.03867</span>
<span class="t c" style="top:164.35px;right:366.70px">34.04961</span>
<span class="t c" style="top:164.35px;right:321.10px">21.27619</span>
<span class="t c" style="top:164.35px;right:275.50px">15</span>
<span class="t c" style="top:178.63px;right:412.30px">-1.37376</span>
<span class="t c" style="top:178.63px;right:366.70px">31.69056</span>
<span class="t c" style="top:178.63px;right:321.10px">0</span>
<span class="t c" style="top:178.63px;right:275.50px">13</span>
<span class="t c" style="top:192.91px;right:412.30px">-0.12142</span>
<span class="t c" style="top:192.91px;right:366.70px">27.24731</span>
<span class="t c" style="top:192.91px;right:321.10px">0</span>
<span class="t c" style="top:192.91px;right:275.50px">13</span>
<span class="t c" style="top:207.19px;right:412.30px">1.003255</span>
<span class="t c" style="top:207.19px;right:366.70px">23.25703</span>
<span class="t c" style="top:207.19px;right:321.10px">0</span>
<span class="t c" style="top:207.19px;right:275.50px">13</span>
<span class="t c" style="top:221.47px;right:412.30px">1.41144</span>
<span class="t c" style="top:221.47px;right:366.70px">21.80881</span>
<span class="t c" style="top:221.47px;right:321.10px">0</span>
<span class="t c" style="top:221.47px;right:275.50px">13</span>
<span class="t c" style="top:235.75px;right:412.30px">2.591129</span>
<span class="t c" style="top:235.75px;right:366.70px">17.62334</span>
<span class="t c" style="top:235.75px;right:321.10px">0</span>
<span class="t c" style="top:235.75px;right:275.50px">13</span>
<span class="t c" style="top:250.03px;right:412.30px">3.109007</span>
<span class="t c" style="top:250.03px;right:366.70px">15.78594</span>
<span class="t c" style="top:250.03px;right:321.10px">0</span>
<span class="t c" style="top:250.03px;right:275.50px">13</span>
<span class="t c" style="top:264.31px;right:412.30px">3.626944</span>
<span class="t c" style="top:264.31px;right:366.70px">13.94833</span>
<span class="t c" style="top:264.31px;right:321.10px">12.11835</span>
<span class="t c" style="top:264.31px;right:275.50px">15</span>
<span class="t c" style="top:278.59px;right:412.30px">3.586307</span>
<span class="t c" style="top:278.59px;right:366.70px">13.23901</span>
<span class="t c" style="top:278.59px;right:321.10px">0</span>
<span class="t c" style="top:278.59px;right:275.50px">13</span>
<span class="t c" style="top:292.87px;right:412.30px">3.442943</span>
<span class="t c" style="top:292.87px;right:366.70px">10.73667</span>
<span class="t c" style="top:292.87px;right:321.10px">0</span>
<span class="t c" style="top:292.87px;right:275.50px">13</span>
<span class="t c" style="top:307.15px;right:412.30px">3.145404</span>
<span class="t c" style="top:307.15px;right:366.70px">5.543266</span>
<span class="t c" style="top:307.15px;right:321.10px">0</span>
<span class="t c" style="top:307.15px;right:275.50px">13</span>
<span class="t c" style="top:321.43px;right:412.30px">2.924054</span>
<span class="t c" style="top:321.43px;right:366.70px">1.679687</span>
<span class="t c" style="top:321.43px;right:321.10px">0</span>
<span class="t c" style="top:321.43px;right:275.50px">13</span>
<span class="t c" style="top:335.71px;right:412.30px">2.773222</span>
<span class="t c" style="top:335.71px;right:366.70px">-0.95301</span>
<span class="t c" style="top:335.71px;right:321.10px">0.935604</span>
<span class="t c" style="top:335.71px;right:275.50px">15</span>
<span class="t c" style="top:349.99px;right:412.30px">7.658579</span>
<span class="t c" style="top:349.99px;right:366.70px">0.564186</span>
<span class="t c" style="top:349.99px;right:321.10px">0</span>
<span class="t c" style="top:349.99px;right:275.50px">13</span>
<span class="t c" style="top:364.27px;right:412.30px">11.7062</span>
<span class="t c" style="top:364.27px;right:366.70px">1.821211</span>
<span class="t c" style="top:364.27px;right:321.10px">0</span>
<span class="t c" style="top:364.27px;right:275.50px">13</span>
<span class="t c" style="top:378.55px;right:412.30px">15.26861</span>
<span class="t c" style="top:378.55px;right:366.70px">2.92755</span>
<span class="t c" style="top:378.55px;right:321.10px">6.12512</span>
<span class="t c" style="top:378.55px;right:275.50px">15</span>
<span class="t c" style="top:392.83px;right:412.30px">17.94978</span>
<span class="t c" style="top:392.83px;right:366.70px">9.438953</span>
<span class="t c" style="top:392.83px;right:321.10px">0</span>
<span class="t c" style="top:392.83px;right:275.50px">13</span>
<span class="t c" style="top:407.11px;right:412.30px">17.985</span>
<span class="t c" style="top:407.11px;right:366.70px">9.524494</span>
<span class="t c" style="top:407.11px;right:321.10px">8.752724</span>
<span class="t c" style="top:407.11px;right:275.50px">15</span>
<span class="t c" style="top:421.39px;right:412.30px">17.7275</span>
<span class="t c" style="top:421.39px;right:366.70px">11.84936</span>
<span class="t c" style="top:421.39px;right:321.10px">0</span>
<span class="t c" style="top:421.39px;right:275.50px">13</span>
<span class="t c" style="top:435.67px;right:412.30px">17.47316</span>
<span class="t c" style="top:435.67px;right:366.70px">14.14564</span>
<span class="t c" style="top:435.67px;right:321.10px">0</span>
<span class="t c" style="top:435.67px;right:275.50px">13</span>
<span class="t c" style="top:449.95px;right:412.30px">17.17716</span>
<span class="t c" style="top:449.95px;right:366.70px">16.81811</span>
<span class="t c" style="top:449.95px;right:321.10px">0</span>
<span class="t c" style="top:449.95px;right:275.50px">13</span>
<span class="t c" style="top:464.23px;right:412.30px">16.96045</span>
<span class="t c" style="top:464.23px;right:366.70px">18.77468</span>
<span class="t c" style="top:464.23px;right:321.10px">0</span>
<span class="t c" style="top:464.23px;right:275.50px">13</span>
<span class="t c" style="top:478.51px;right:412.30px">16.65222</span>
<span class="t c" style="top:478.51px;right:366.70px">21.55763</span>
<span class="t c" style="top:478.51px;right:321.10px">0</span>
<span class="t c" style="top:478.51px;right:275.50px">13</span>
<span class="t c" style="top:492.79px;right:412.30px">16.08824</span>
<span class="t c" style="top:492.79px;right:366.70px">26.64955</span>
<span class="t c" style="top:492.79px;right:321.10px">0</span>
<span class="t c" style="top:492.79px;right:275.50px">13</span>
<span class="t c" style="top:507.07px;right:412.30px">15.52477</span>
<span class="t c" style="top:507.07px;right:366.70px">31.73687</span>
<span class="t c" style="top:507.07px;right:321.10px">0</span>
<span class="t c" style="top:507.07px;right:275.50px">13</span>
<span class="t c" style="top:521.35px;right:412.30px">15.26861</span>
<span class="t c" style="top:521.35px;right:366.70px">34.04961</span>
<span class="t c" style="top:521.35px;right:321.10px">20.99831</span>
<span class="t c" style="top:521.35px;right:275.50px">15</span>
<span class="t c" style="top:535.63px;right:412.30px">2.229944</span>
<span class="t c" style="top:535.63px;right:366.70px">36.45555</span>
<span class="t c" style="top:535.63px;right:321.10px">21.52146</span>
<span class="t c" style="top:535.63px;right:275.50px">15</span>
<span class="t c" style="top:549.91px;right:412.30px">-2.03867</span>
<span class="t c" style="top:549.91px;right:366.70px">34.04961</span>
<span class="t c" style="top:549.91px;right:321.10px">21.27619</span>
<span class="t c" style="top:549.91px;right:275.50px">-1</span>
<span class="t c" style="top:578.47px;right:412.30px">-1.37376</span>
<span class="t c" style="top:578.47px;right:366.70px">31.69056</span>
<span class="t c" style="top:578.47px;right:321.10px">20</span>
<span class="t c" style="top:578.47px;right:275.50px">0</span>
<span class="t c" style="top:592.75px;right:412.30px">-1.07543</span>
<span class="t c" style="top:592.75px;right:366.70px">31.7907</span>
<span class="t c" style="top:592.75px;right:321.10px">20</span>
<span class="t c" style="top:592.75px;right:275.50px">0</span>
<span class="t c" style="top:607.03px;right:412.30px">5.644833</span>
<span class="t c" style="top:607.03px;right:366.70px">33.04066</span>
<span class="t c" style="top:607.03px;right:321.10px">20</span>
<span class="t c" style="top:607.03px;right:275.50px">0</span>
<span class="t c" style="top:621.31px;right:412.30px">12.62703</span>
<span class="t c" style="top:621.31px;right:366.70px">32.56097</span>
<span class="t c" style="top:621.31px;right:321.10px">20</span>
<span class="t c" style="top:621.31px;right:275.50px">0</span>
<span class="t c" style="top:635.59px;right:412.30px">15.52477</span>
<span class="t c" style="top:635.59px;right:366.70px">31.73687</span>
<span class="t c" style="top:635.59px;right:321.10px">20</span>
<span class="t c" style="top:635.59px;right:275.50px">-1</span>
<span class="t c" style="top:649.87px;right:412.30px">-0.12142</span>
<span class="t c" style="top:649.87px;right:366.70px">27.24731</span>
<span class="t c" style="top:649.87px;right:321.10px">18</span>
<span class="t c" style="top:649.87px;right:275.50px">0</span>
<span class="t c" style="top:664.15px;right:412.30px">1.949497</span>
<span class="t c" style="top:664.15px;right:366.70px">28.26655</span>
<span class="t c" style="top:664.15px;right:321.10px">18</span>
<span class="t c" style="top:664.15px;right:275.50px">0</span>
<span class="t c" style="top:678.43px;right:412.30px">5.955278</span>
<span class="t c" style="top:678.43px;right:366.70px">29.23772</span>
<span class="t c" style="top:678.43px;right:321.10px">18</span>
<span class="t c" style="top:678.43px;right:275.50px">0</span>
<span class="t c" style="top:692.71px;right:412.30px">11.22215</span>
<span class="t c" style="top:692.71px;right:366.70px">28.75093</span>
<span class="t c" style="top:692.71px;right:321.10px">18</span>
<span class="t c" style="top:692.71px;right:275.50px">0</span>
</div>
<div class="sec sheetbar">
<div class="b " style="left:0.00px;top:705.00px;width:475.00px;height:20.40px;background:#e6e6e6"></div>
<div class="b " style="left:0.00px;top:704.60px;width:475.00px;height:1.00px;background:#bdbdbd"></div>
<div class="b " style="left:71.40px;top:705.00px;width:37.60px;height:17.00px;background:#fff"></div>
<div class="b " style="left:71.40px;top:721.20px;width:37.60px;height:1.80px;background:#217346"></div>
<span class="t" style="top:709.75px;font-size:9.80px;color:#217346;font-weight:bold;-webkit-text-stroke:0px currentColor;letter-spacing:0.089px;left:79.36px">topo</span>
<svg class="b" style="left:19.40px;top:711.80px;" width="3.4" height="5.6" viewBox="0 0 3.4 5.6"><path d="M3.2 0.2 V5.4 L0.4 2.8 Z" fill="#c4c4c4"/></svg>
<svg class="b" style="left:39.40px;top:711.80px;" width="3.4" height="5.6" viewBox="0 0 3.4 5.6"><path d="M0.2 0.2 V5.4 L3 2.8 Z" fill="#c4c4c4"/></svg>
<svg class="b" style="left:132.60px;top:708.80px;" width="11.4" height="11.4" viewBox="0 0 11.4 11.4"><circle cx="5.7" cy="5.7" r="4.9" fill="none" stroke="#777" stroke-width="0.9"/><path d="M5.7 3 V8.4 M3 5.7 H8.4" stroke="#777" stroke-width="0.9"/></svg>
<div class="b " style="left:0.00px;top:725.20px;width:475.00px;height:16.00px;background:#f3f2f1"></div>
<div class="b " style="left:0.00px;top:724.60px;width:475.00px;height:1.00px;background:#d6d6d6"></div>
<svg class="b" style="left:5.40px;top:728.40px;" width="11" height="9.6" viewBox="0 0 11 9.6"><path d="M0.5 2 H10 V4.4 M0.5 2 V9 H5.4 M0.5 0.6 H10 M2.6 2 V9" fill="none" stroke="#666" stroke-width="0.9"/><circle cx="8" cy="6.8" r="2.5" fill="#f3f2f1" stroke="#555" stroke-width="0.9"/><circle cx="8" cy="6.8" r="0.9" fill="#444"/></svg>
</div>
<div class="sec popups">
<div class="b pop" style="left:218.50px;top:147.00px;width:188px;height:39px"><div class="b " style="left:2.70px;top:3.00px;width:45.00px;height:16.60px;background:#fff;border:1px solid #cfcfcf;box-sizing:border-box"></div>
<div class="b " style="left:48.30px;top:3.00px;width:32.80px;height:16.60px;background:#fff;border:1px solid #cfcfcf;box-sizing:border-box"></div>
<span class="t" style="top:6.27px;font-size:8.60px;letter-spacing:0.096px;left:4.44px">Calibri</span>
<svg class="b" style="left:40.50px;top:9.40px;" width="6.2" height="4.4" viewBox="0 0 6.2 4.4"><path d="M1 1 L3.1 3.4 L5.2 1" fill="none" stroke="#444" stroke-width="1"/></svg>
<span class="t" style="top:6.27px;font-size:8.60px;left:50.40px">11</span>
<svg class="b" style="left:73.00px;top:9.40px;" width="6.2" height="4.4" viewBox="0 0 6.2 4.4"><path d="M1 1 L3.1 3.4 L5.2 1" fill="none" stroke="#444" stroke-width="1"/></svg>
<span class="t" style="top:4.66px;font-size:14.40px;color:#666;-webkit-text-stroke:0px currentColor;left:82.80px">A</span>
<svg class="b" style="left:90.40px;top:6.60px;" width="5" height="4" viewBox="0 0 5 4"><path d="M0.6 3.2 L2.4 1 L4.2 3.2" fill="none" stroke="#2b88d8" stroke-width="1"/></svg>
<span class="t" style="top:6.52px;font-size:12.20px;color:#666;-webkit-text-stroke:0px currentColor;left:99.20px">A</span>
<svg class="b" style="left:106.20px;top:6.60px;" width="5" height="4" viewBox="0 0 5 4"><path d="M0.6 0.8 L2.4 3 L4.2 0.8" fill="none" stroke="#2b88d8" stroke-width="1"/></svg>
<svg class="b" style="left:114.50px;top:6.60px;" width="12" height="10.5" viewBox="0 0 12 10.5"><rect x="0.4" y="1" width="10.4" height="6.2" fill="#fff" stroke="#5a5a5a" stroke-width="0.8"/><circle cx="5.6" cy="4.1" r="1.7" fill="none" stroke="#5a5a5a" stroke-width="0.7"/><path d="M2 2.4 V5.8 M9 2.4 V5.8" stroke="#5a5a5a" stroke-width="0.6"/><rect x="6.2" y="4.2" width="5.6" height="5.8" rx="0.8" fill="#e8761a"/><path d="M7.2 6 H10.8 M7.2 7.2 H10.8 M7.2 8.4 H10.8" stroke="#fff" stroke-width="0.6"/></svg>
<svg class="b" style="left:129.60px;top:9.40px;" width="6.2" height="4.4" viewBox="0 0 6.2 4.4"><path d="M1 1 L3.1 3.4 L5.2 1" fill="none" stroke="#444" stroke-width="1"/></svg>
<span class="t" style="top:5.21px;font-size:13.40px;color:#555;-webkit-text-stroke:0px currentColor;left:141.00px">%</span>
<svg class="b" style="left:159.30px;top:7.40px;" width="6.5" height="8.5" viewBox="0 0 6.5 8.5"><path d="M3 0.2 C5.2 0.2 6.2 1.8 6 3.6 C5.8 5.8 4 7.6 1.6 8.2 L1.3 7.5 C2.8 6.8 3.6 5.8 3.6 4.9 C1.8 5.1 0.6 4 0.6 2.6 C0.6 1.2 1.7 0.2 3 0.2 Z" fill="#444"/></svg>
<svg class="b" style="left:171.40px;top:5.40px;" width="12.2" height="11.4" viewBox="0 0 10.8 10.8"><rect x="0.5" y="0.5" width="9.8" height="9.8" fill="#fff" stroke="#555" stroke-width="0.9"/><path d="M0.5 2.9 H10.3 M0.5 7.9 H10.3 M3.6 0.5 V2.9 M7.2 0.5 V2.9 M3.6 7.9 V10.3 M7.2 7.9 V10.3" stroke="#777" stroke-width="0.7"/><rect x="0.6" y="3.1" width="9.6" height="4.6" fill="#cfe6f8" stroke="#2b88d8" stroke-width="0.7"/><path d="M1.8 5.4 H9 M3.2 4 L1.8 5.4 L3.2 6.8 M7.6 4 L9 5.4 L7.6 6.8" fill="none" stroke="#1f7bd0" stroke-width="1"/></svg>
<span class="t" style="top:23.39px;font-size:9.40px;color:#333;font-weight:bold;left:7.80px">B</span>
<span class="t" style="top:23.02px;font-size:10.20px;color:#333;font-style:italic;font-family:'Liberation Serif',serif;left:24.20px">I</span>
<svg class="b" style="left:36.50px;top:23.00px;" width="12" height="12" viewBox="0 0 12 12"><path d="M0 0.5 H10 M1.8 3.5 H8.2 M0 6.5 H10 M1.8 9.5 H8.2" stroke="#4a4a4a" stroke-width="1" fill="none"/></svg>
<svg class="b" style="left:51.60px;top:22.60px;" width="12" height="11.5" viewBox="0 0 12 11.5"><path d="M4.6 0.8 L9.2 5.2 L5.4 8.6 L1.2 4.6 Z" fill="#fff" stroke="#505050" stroke-width="0.9"/><path d="M8.6 2.6 C10.2 3.2 10.6 5 10.2 6.6" fill="none" stroke="#2b78c8" stroke-width="1.2"/><rect x="0" y="9" width="12" height="2.5" fill="#ffef00"/></svg>
<svg class="b" style="left:66.60px;top:26.20px;" width="6.2" height="4.4" viewBox="0 0 6.2 4.4"><path d="M1 1 L3.1 3.4 L5.2 1" fill="none" stroke="#444" stroke-width="1"/></svg>
<span class="t" style="top:22.07px;font-size:11.20px;left:80.30px">A</span>
<div class="b " style="left:78.00px;top:31.60px;width:11.60px;height:2.50px;background:#f00000"></div>
<svg class="b" style="left:93.00px;top:26.20px;" width="6.2" height="4.4" viewBox="0 0 6.2 4.4"><path d="M1 1 L3.1 3.4 L5.2 1" fill="none" stroke="#444" stroke-width="1"/></svg>
<svg class="b" style="left:104.50px;top:22.80px;" width="11" height="11.5" viewBox="0 0 11 11.5"><rect x="0.5" y="0.5" width="10" height="10" fill="#fff" stroke="#b0b0b0" stroke-width="0.9"/><path d="M5.5 0.5 V10.5 M0.5 5.5 H10.5" stroke="#b0b0b0" stroke-width="0.9"/><path d="M0 10.7 H11" stroke="#444" stroke-width="1.5"/></svg>
<svg class="b" style="left:119.60px;top:26.20px;" width="6.2" height="4.4" viewBox="0 0 6.2 4.4"><path d="M1 1 L3.1 3.4 L5.2 1" fill="none" stroke="#444" stroke-width="1"/></svg>
<svg class="b" style="left:130.40px;top:23.00px;" width="11.5" height="11" viewBox="0 0 11.5 11"><text x="6.6" y="5" font-size="6.2" font-family="Liberation Sans,sans-serif" fill="#777">0</text><text x="2.2" y="10.8" font-size="6.2" font-family="Liberation Sans,sans-serif" fill="#777">.00</text><path d="M0.4 2.8 H4.6 M2 1.2 L0.4 2.8 L2 4.4" fill="none" stroke="#2b88d8" stroke-width="1"/></svg>
<svg class="b" style="left:146.40px;top:23.00px;" width="11.5" height="11" viewBox="0 0 11.5 11"><text x="2.2" y="5" font-size="6.2" font-family="Liberation Sans,sans-serif" fill="#777">.00</text><text x="5.8" y="10.8" font-size="6.2" font-family="Liberation Sans,sans-serif" fill="#777">.0</text><path d="M0.4 8.4 H4.6 M3 6.8 L4.6 8.4 L3 10" fill="none" stroke="#2b88d8" stroke-width="1"/></svg>
<svg class="b" style="left:162.60px;top:22.20px;" width="12" height="11.5" viewBox="0 0 12 11.5"><path d="M0.7 6.2 L5.6 2.6 L8.6 7.6 L4.2 10.8 Z" fill="#f6b46a" stroke="#e07a14" stroke-width="1" stroke-linejoin="round"/><path d="M2.6 8.4 L6.6 5.4" stroke="#e07a14" stroke-width="0.7"/><path d="M5.8 2.4 L7.6 1.2 L10.4 5.8 L8.6 7.2" fill="#fff" stroke="#555" stroke-width="0.8"/><path d="M8.4 2.4 L10.6 0.6 L11.6 1.8 L9.6 4.2" fill="#888" stroke="#555" stroke-width="0.8"/></svg>
</div>
<div class="b pop" style="left:218.70px;top:197.80px;width:149.60px;height:396.80px"><div class="b " style="left:1.40px;top:150.40px;width:146.80px;height:19.60px;background:#d0cecc"></div>
<svg class="b" style="left:11.20px;top:5.40px;" width="7.84" height="11.27" viewBox="0 0 8 11.5"><path d="M1.6 0.3 L5.6 8.2 M6.4 0.3 L2.4 8.2" stroke="#505050" stroke-width="0.95" fill="none"/><circle cx="1.9" cy="9.6" r="1.35" fill="none" stroke="#2b88d8" stroke-width="0.95"/><circle cx="6.1" cy="9.6" r="1.35" fill="none" stroke="#2b88d8" stroke-width="0.95"/></svg>
<span class="t" style="top:7.07px;font-size:8.60px;color:#2b2b2b;letter-spacing:0.214px;left:26.74px">Cu<u>t</u></span>
<svg class="b" style="left:9.40px;top:24.40px;" width="12" height="11.5" viewBox="0 0 12 11.5"><path d="M3.6 9.2 H0.6 V0.6 H5.2 L6.6 2.0" fill="none" stroke="#505050" stroke-width="0.95"/><path d="M4.4 2.9 H9.0 L11.4 5.2 V10.9 H4.4 Z" fill="#fff" stroke="#505050" stroke-width="0.95"/><path d="M7 7.2 H9 M7 8.8 H9" stroke="#505050" stroke-width="0.7"/></svg>
<span class="t" style="top:27.37px;font-size:8.60px;color:#2b2b2b;letter-spacing:0.113px;left:26.74px"><u>C</u>opy</span>
<svg class="b" style="left:10.20px;top:44.40px;" width="11.4" height="12.6" viewBox="0 0 19 21.5"><path d="M7 3.2 H1 V18.2 H8.5" fill="none" stroke="#b5b5b5" stroke-width="1.3"/><path d="M12.5 3.2 H14.6 V7.5" fill="none" stroke="#b5b5b5" stroke-width="1.3"/><path d="M4.6 4.6 V3 H6.2 C6.2 0.4 9.4 0.4 9.4 3 H11 V4.6 Z" fill="none" stroke="#b5b5b5" stroke-width="1"/><rect x="9.2" y="8.2" width="8.8" height="12.3" rx="0.8" fill="#f0f0f0" stroke="#b5b5b5" stroke-width="1.1"/></svg>
<span class="t" style="top:48.37px;font-size:8.60px;color:#222;font-weight:bold;letter-spacing:-0.223px;left:27.14px">Paste Options:</span>
<svg class="b" style="left:28.20px;top:65.20px;" width="15.2" height="17" viewBox="0 0 19 21.5"><path d="M7 3.2 H1 V18.2 H8.5" fill="none" stroke="#b5b5b5" stroke-width="1.3"/><path d="M12.5 3.2 H14.6 V7.5" fill="none" stroke="#b5b5b5" stroke-width="1.3"/><path d="M4.6 4.6 V3 H6.2 C6.2 0.4 9.4 0.4 9.4 3 H11 V4.6 Z" fill="none" stroke="#b5b5b5" stroke-width="1"/><rect x="9.2" y="8.2" width="8.8" height="12.3" rx="0.8" fill="#f0f0f0" stroke="#b5b5b5" stroke-width="1.1"/></svg>
<span class="t" style="top:91.77px;font-size:8.60px;color:#a6a6a6;letter-spacing:-0.294px;left:26.74px">Paste <u>S</u>pecial...</span>
<div class="b " style="left:24.00px;top:106.80px;width:124.60px;height:1.00px;background:#e5e3e1"></div>
<svg class="b" style="left:9.60px;top:111.20px;" width="12" height="12" viewBox="0 0 12 12"><circle cx="7.6" cy="4.4" r="3.6" fill="#fff" stroke="#2b88d8" stroke-width="1"/><path d="M5 7.2 L0.6 11.4" stroke="#2b88d8" stroke-width="1.2"/><path d="M7.6 2.6 V4.8" stroke="#444" stroke-width="0.9"/><circle cx="7.6" cy="6.1" r="0.5" fill="#444"/></svg>
<span class="t" style="top:114.07px;font-size:8.60px;color:#2b2b2b;letter-spacing:0.001px;left:26.74px">Smart <u>L</u>ookup</span>
<div class="b " style="left:24.00px;top:128.70px;width:124.60px;height:1.00px;background:#e5e3e1"></div>
<span class="t" style="top:136.17px;font-size:8.60px;color:#2b2b2b;letter-spacing:0.005px;left:26.74px"><u>I</u>nsert</span>
<span class="t" style="top:156.17px;font-size:8.60px;color:#2b2b2b;letter-spacing:-0.055px;left:26.74px"><u>D</u>elete</span>
<span class="t" style="top:176.17px;font-size:8.60px;color:#2b2b2b;letter-spacing:-0.058px;left:26.74px">Clear Co<u>n</u>tents</span>
<div class="b " style="left:24.00px;top:191.20px;width:124.60px;height:1.00px;background:#e5e3e1"></div>
<svg class="b" style="left:9.40px;top:196.00px;" width="12" height="11" viewBox="0 0 12 11"><rect x="0.6" y="2.6" width="10.6" height="7.6" fill="none" stroke="#a8a8a8" stroke-width="0.9"/><path d="M2.4 7.6 H9.6 M2.4 5.4 L4 3.6 M1.4 0.6 H5.4 L4 2.4" fill="none" stroke="#a8a8a8" stroke-width="0.9"/></svg>
<span class="t" style="top:198.07px;font-size:8.60px;color:#a6a6a6;letter-spacing:0.010px;left:26.74px"><u>Q</u>uick Analysis</span>
<span class="t" style="top:218.07px;font-size:8.60px;color:#2b2b2b;letter-spacing:0.068px;left:26.74px">Filt<u>e</u>r</span>
<span class="t" style="top:238.07px;font-size:8.60px;color:#2b2b2b;letter-spacing:0.067px;left:26.74px">S<u>o</u>rt</span>
<svg class="b" style="left:139.00px;top:218.00px;" width="5" height="8" viewBox="0 0 5 8"><path d="M0.7 0.7 L4 4 L0.7 7.3" fill="none" stroke="#555" stroke-width="1"/></svg>
<svg class="b" style="left:139.00px;top:238.00px;" width="5" height="8" viewBox="0 0 5 8"><path d="M0.7 0.7 L4 4 L0.7 7.3" fill="none" stroke="#555" stroke-width="1"/></svg>
<div class="b " style="left:24.00px;top:253.00px;width:124.60px;height:1.00px;background:#e5e3e1"></div>
<svg class="b" style="left:9.20px;top:258.00px;" width="11.5" height="10.5" viewBox="0 0 11.5 10.5"><path d="M3.8 1.6 H10.6 V7.8 H4.4 L2.2 10 V7.8 H1.2 V4.4" fill="none" stroke="#505050" stroke-width="0.9"/><path d="M2.1 0 V4.4 M0 2.2 H4.3" stroke="#2a9d4b" stroke-width="1"/></svg>
<span class="t" style="top:260.17px;font-size:8.60px;color:#2b2b2b;letter-spacing:0.152px;left:26.74px">New Co<u>m</u>ment</span>
<svg class="b" style="left:9.20px;top:278.00px;" width="11.5" height="10.5" viewBox="0 0 11.5 10.5"><path d="M3.6 1.6 H10.6 V7.8 L8.4 10 H1.2 V4.2" fill="none" stroke="#505050" stroke-width="0.9"/><path d="M10.6 7.8 H8.4 V10" fill="none" stroke="#505050" stroke-width="0.7"/><path d="M2.1 0 V4.4 M0 2.2 H4.3" stroke="#2a9d4b" stroke-width="1"/></svg>
<span class="t" style="top:280.17px;font-size:8.60px;color:#2b2b2b;letter-spacing:0.160px;left:26.74px"><u>N</u>ew Note</span>
<svg class="b" style="left:9.20px;top:298.00px;" width="11.5" height="10.5" viewBox="0 0 11.5 10.5"><path d="M3.8 1.6 H10.6 V7.8 H4.4 L2.2 10 V7.8 H1.2 V4.4" fill="none" stroke="#505050" stroke-width="0.9"/><path d="M0.1 0.1 L3.9 3.9 M3.9 0.1 L0.1 3.9" stroke="#e03030" stroke-width="1"/></svg>
<span class="t" style="top:300.17px;font-size:8.60px;color:#2b2b2b;letter-spacing:0.038px;left:26.74px">Delete Co<u>m</u>ment</span>
<div class="b " style="left:24.00px;top:314.70px;width:124.60px;height:1.00px;background:#e5e3e1"></div>
<svg class="b" style="left:10.80px;top:320.20px;" width="9" height="11.5" viewBox="0 0 9 11.5"><rect x="0.5" y="0.5" width="7.8" height="10.2" fill="#fff" stroke="#505050" stroke-width="0.9"/><path d="M2.2 3.2 H3.4 M4.4 3.2 H6.6 M2.2 5.6 H3.4 M4.4 5.6 H6.6 M2.2 8 H3.4 M4.4 8 H6.6" stroke="#505050" stroke-width="0.8"/></svg>
<span class="t" style="top:322.17px;font-size:8.60px;color:#2b2b2b;letter-spacing:-0.123px;left:26.74px"><u>F</u>ormat Cells...</span>
<span class="t" style="top:342.27px;font-size:8.60px;color:#2b2b2b;letter-spacing:0.000px;left:26.74px">Pic<u>k</u> From Drop-down List...</span>
<span class="t" style="top:362.17px;font-size:8.60px;color:#2b2b2b;letter-spacing:-0.057px;left:26.74px">Define N<u>a</u>me...</span>
<svg class="b" style="left:9.40px;top:381.40px;" width="12.2" height="8.6" viewBox="0 0 12.2 8.6"><rect x="0.5" y="0.8" width="7" height="4.6" rx="2.3" fill="none" stroke="#a8a8a8" stroke-width="0.9"/><rect x="4.6" y="3.2" width="7" height="4.6" rx="2.3" fill="none" stroke="#a8a8a8" stroke-width="0.9"/></svg>
<span class="t" style="top:381.87px;font-size:8.60px;color:#a6a6a6;letter-spacing:0.313px;left:26.74px">L<u>i</u>nk</span>
<div class="b " style="left:132.40px;top:381.40px;width:1.00px;height:9.00px;background:#dedede"></div>
<svg class="b" style="left:139.00px;top:383.00px;" width="5" height="8" viewBox="0 0 5 8"><path d="M0.7 0.7 L4 4 L0.7 7.3" fill="none" stroke="#777" stroke-width="1"/></svg>
</div>
<svg class="b" style="left:315.00px;top:354.60px;" width="9.5" height="14" viewBox="0 0 9.5 14"><path d="M0.6 0.6 V11 L3 8.8 L4.8 13 L6.6 12.2 L4.8 8.2 H8.2 Z" fill="#fff" stroke="#111" stroke-width="0.9" stroke-linejoin="round"/></svg>
</div>
</div>
<div class="win win-right" style="left:524px;width:474px">
<div class="sec titlebar">
<div class="b " style="left:0.00px;top:0.00px;width:475.00px;height:23.00px;background:#217346"></div>
<span class="t" style="top:7.47px;font-size:8.60px;color:#fff;letter-spacing:-0.094px;left:15.94px">AutoSave</span>
<div class="b " style="left:57.00px;top:5.00px;width:27.00px;height:11.60px;border:1px solid #fff;border-radius:6px;box-sizing:border-box"></div>
<div class="b " style="left:60.20px;top:8.40px;width:5.00px;height:5.00px;background:#fff;border-radius:50%"></div>
<span class="t" style="top:7.92px;font-size:7.00px;color:#fff;font-weight:bold;-webkit-text-stroke:0px currentColor;letter-spacing:-0.090px;left:70.34px">Off</span>
<svg class="b" style="left:94.80px;top:5.90px;" width="12" height="12" viewBox="0 0 12 12"><path d="M0.6 0.6 H9.6 L11.4 2.4 V11.4 H0.6 Z M3 0.6 V4.2 H8.6 V0.6 M3 11.4 V7 H9 V11.4 M4.6 11.4 V9" fill="none" stroke="#fff" stroke-width="0.95"/></svg>
<svg class="b" style="left:115.80px;top:6.40px;" width="11" height="12" viewBox="0 0 11 12"><path d="M0.8 0.8 V5 H5 M0.9 4.9 C3.2 1.6 7.4 1.2 9.2 3.6 C11 6.2 8.4 8.6 4 11.6" fill="none" stroke="#fff" stroke-width="1"/></svg>
<svg class="b" style="left:129.60px;top:8.80px;" width="5.8" height="4.2" viewBox="0 0 5.8 4.2"><path d="M1 1 L2.9 3.2 L4.8 1" fill="none" stroke="#fff" stroke-width="1"/></svg>
<svg class="b" style="left:143.20px;top:6.40px;" width="11" height="12" viewBox="0 0 11 12"><path d="M10.2 0.8 V5 H6 M10.1 4.9 C7.8 1.6 3.6 1.2 1.8 3.6 C0 6.2 2.6 8.6 7 11.6" fill="none" stroke="#6ea286" stroke-width="1"/></svg>
<svg class="b" style="left:156.60px;top:8.80px;" width="5.8" height="4.2" viewBox="0 0 5.8 4.2"><path d="M1 1 L2.9 3.2 L4.8 1" fill="none" stroke="#6ea286" stroke-width="1"/></svg>
<svg class="b" style="left:172.20px;top:8.40px;" width="6.4" height="6.4" viewBox="0 0 6.4 6.4"><path d="M0.4 0.8 H5.8" stroke="#fff" stroke-width="1"/><path d="M0.8 2.8 L3.1 5.2 L5.4 2.8" fill="none" stroke="#fff" stroke-width="1"/></svg>
<span class="t" style="top:7.47px;font-size:8.60px;color:#fff;letter-spacing:-0.039px;left:335.74px">topo.csv&nbsp; -&nbsp; Excel</span>
</div>
<div class="sec ribbon">
<div class="b " style="left:0.00px;top:23.00px;width:475.00px;height:90.00px;background:#f3f2f1"></div>
<span class="t" style="top:30.21px;font-size:9.50px;letter-spacing:-0.218px;left:11.58px">File</span>
<span class="t" style="top:30.21px;font-size:9.50px;letter-spacing:0.029px;left:94.08px">Insert</span>
<span class="t" style="top:30.21px;font-size:9.50px;letter-spacing:-0.156px;left:138.88px">Page Layout</span>
<span class="t" style="top:30.21px;font-size:9.50px;letter-spacing:-0.119px;left:210.88px">Formulas</span>
<span class="t" style="top:30.21px;font-size:9.50px;letter-spacing:0.015px;left:269.38px">Data</span>
<span class="t" style="top:30.21px;font-size:9.50px;letter-spacing:-0.253px;left:309.38px">Review</span>
<span class="t" style="top:30.21px;font-size:9.50px;letter-spacing:-0.070px;left:357.88px">View</span>
<span class="t" style="top:30.21px;font-size:9.50px;letter-spacing:0.092px;left:396.88px">Developer</span>
<span class="t" style="top:30.21px;font-size:9.50px;left:460.00px">Help</span>
<span class="t" style="top:30.21px;font-size:9.50px;color:#333;font-weight:bold;-webkit-text-stroke:0px currentColor;letter-spacing:0.308px;left:47.88px">Home</span>
<div class="b " style="left:48.50px;top:40.80px;width:27.00px;height:2.60px;background:#217346"></div>
<svg class="b" style="left:13.00px;top:50.40px;" width="19" height="21.5" viewBox="0 0 19 21.5"><path d="M7 3.2 H1 V18.2 H8.5" fill="none" stroke="#e8821e" stroke-width="1.3"/><path d="M12.5 3.2 H14.6 V7.5" fill="none" stroke="#e8821e" stroke-width="1.3"/><path d="M4.6 4.6 V3 H6.2 C6.2 0.4 9.4 0.4 9.4 3 H11 V4.6 Z" fill="none" stroke="#5a5a5a" stroke-width="1"/><rect x="9.2" y="8.2" width="8.8" height="12.3" rx="0.8" fill="#fff" stroke="#5a5a5a" stroke-width="1.1"/></svg>
<span class="t" style="top:75.77px;font-size:8.60px;letter-spacing:-0.190px;left:10.44px">Paste</span>
<svg class="b" style="left:17.60px;top:88.60px;" width="5.8" height="4.2" viewBox="0 0 5.8 4.2"><path d="M1 1 L2.9 3.2 L4.8 1" fill="none" stroke="#444" stroke-width="1"/></svg>
<svg class="b" style="left:39.50px;top:50.50px;" width="8" height="11.5" viewBox="0 0 8 11.5"><path d="M1.6 0.3 L5.6 8.2 M6.4 0.3 L2.4 8.2" stroke="#505050" stroke-width="0.95" fill="none"/><circle cx="1.9" cy="9.6" r="1.35" fill="none" stroke="#2b88d8" stroke-width="0.95"/><circle cx="6.1" cy="9.6" r="1.35" fill="none" stroke="#2b88d8" stroke-width="0.95"/></svg>
<span class="t" style="top:52.67px;font-size:8.60px;letter-spacing:0.219px;left:51.44px">Cut</span>
<svg class="b" style="left:37.50px;top:67.00px;" width="12" height="11.5" viewBox="0 0 12 11.5"><path d="M3.6 9.2 H0.6 V0.6 H5.2 L6.6 2.0" fill="none" stroke="#505050" stroke-width="0.95"/><path d="M4.4 2.9 H9.0 L11.4 5.2 V10.9 H4.4 Z" fill="#fff" stroke="#505050" stroke-width="0.95"/><path d="M7 7.2 H9 M7 8.8 H9" stroke="#505050" stroke-width="0.7"/></svg>
<span class="t" style="top:70.17px;font-size:8.60px;letter-spacing:0.117px;left:51.44px">Copy</span>
<svg class="b" style="left:78.00px;top:70.80px;" width="6.2" height="4.4" viewBox="0 0 6.2 4.4"><path d="M1 1 L3.1 3.4 L5.2 1" fill="none" stroke="#444" stroke-width="1"/></svg>
<svg class="b" style="left:37.80px;top:83.80px;" width="12" height="11.5" viewBox="0 0 12 11.5"><path d="M0.7 6.2 L5.6 2.6 L8.6 7.6 L4.2 10.8 Z" fill="#f6b46a" stroke="#e07a14" stroke-width="1" stroke-linejoin="round"/><path d="M2.6 8.4 L6.6 5.4" stroke="#e07a14" stroke-width="0.7"/><path d="M5.8 2.4 L7.6 1.2 L10.4 5.8 L8.6 7.2" fill="#fff" stroke="#555" stroke-width="0.8"/><path d="M8.4 2.4 L10.6 0.6 L11.6 1.8 L9.6 4.2" fill="#888" stroke="#555" stroke-width="0.8"/></svg>
<span class="t" style="top:86.77px;font-size:8.60px;letter-spacing:-0.058px;left:51.44px">Format Painter</span>
<span class="t" style="top:103.87px;font-size:8.60px;letter-spacing:0.026px;left:33.94px">Clipboard</span>
<svg class="b" style="left:109.00px;top:105.00px;" width="5.8" height="5.8" viewBox="0 0 5.8 5.8"><path d="M0.5 4 V0.5 H4" fill="none" stroke="#555" stroke-width="1"/><path d="M2 2 L5.2 5.2 M5.2 2.4 V5.2 H2.4" fill="none" stroke="#555" stroke-width="1"/></svg>
<div class="b " style="left:117.00px;top:48.00px;width:1.00px;height:62.00px;background:#c8c6c4"></div>
<div class="b " style="left:123.00px;top:53.00px;width:87.50px;height:16.60px;background:#fff;border:1px solid #d0cecc;box-sizing:border-box"></div>
<div class="b " style="left:211.20px;top:53.00px;width:30.40px;height:16.60px;background:#fff;border:1px solid #d0cecc;box-sizing:border-box"></div>
<span class="t" style="top:57.87px;font-size:8.60px;letter-spacing:0.096px;left:125.44px">Calibri</span>
<svg class="b" style="left:203.00px;top:60.00px;" width="6.2" height="4.4" viewBox="0 0 6.2 4.4"><path d="M1 1 L3.1 3.4 L5.2 1" fill="none" stroke="#444" stroke-width="1"/></svg>
<span class="t" style="top:57.87px;font-size:8.60px;left:213.40px">11</span>
<svg class="b" style="left:234.00px;top:60.00px;" width="6.2" height="4.4" viewBox="0 0 6.2 4.4"><path d="M1 1 L3.1 3.4 L5.2 1" fill="none" stroke="#444" stroke-width="1"/></svg>
<span class="t" style="top:54.48px;font-size:15.20px;color:#666;-webkit-text-stroke:0px currentColor;left:243.30px">A</span>
<svg class="b" style="left:251.00px;top:55.40px;" width="5" height="4" viewBox="0 0 5 4"><path d="M0.6 3.2 L2.4 1 L4.2 3.2" fill="none" stroke="#2b88d8" stroke-width="1"/></svg>
<span class="t" style="top:57.05px;font-size:12.40px;color:#666;-webkit-text-stroke:0px currentColor;left:259.80px">A</span>
<svg class="b" style="left:267.00px;top:55.40px;" width="5" height="4" viewBox="0 0 5 4"><path d="M0.6 0.8 L2.4 3 L4.2 0.8" fill="none" stroke="#2b88d8" stroke-width="1"/></svg>
<span class="t" style="top:78.75px;font-size:9.80px;color:#333;font-weight:bold;left:128.50px">B</span>
<span class="t" style="top:78.52px;font-size:10.20px;color:#333;font-style:italic;font-family:'Liberation Serif',serif;left:145.00px">I</span>
<span class="t" style="top:79.06px;font-size:9.20px;color:#333;left:159.00px">U</span>
<div class="b " style="left:159.00px;top:87.60px;width:6.60px;height:0.90px;background:#444"></div>
<svg class="b" style="left:172.00px;top:82.20px;" width="6.2" height="4.4" viewBox="0 0 6.2 4.4"><path d="M1 1 L3.1 3.4 L5.2 1" fill="none" stroke="#444" stroke-width="1"/></svg>
<div class="b " style="left:184.00px;top:77.00px;width:1.00px;height:14.00px;background:#d2d0ce"></div>
<svg class="b" style="left:189.50px;top:78.00px;" width="11" height="11.5" viewBox="0 0 11 11.5"><rect x="0.5" y="0.5" width="10" height="10" fill="#fff" stroke="#b0b0b0" stroke-width="0.9"/><path d="M5.5 0.5 V10.5 M0.5 5.5 H10.5" stroke="#b0b0b0" stroke-width="0.9"/><path d="M0 10.7 H11" stroke="#444" stroke-width="1.5"/></svg>
<svg class="b" style="left:204.60px;top:82.20px;" width="6.2" height="4.4" viewBox="0 0 6.2 4.4"><path d="M1 1 L3.1 3.4 L5.2 1" fill="none" stroke="#444" stroke-width="1"/></svg>
<div class="b " style="left:217.00px;top:77.00px;width:1.00px;height:14.00px;background:#d2d0ce"></div>
<svg class="b" style="left:222.20px;top:78.00px;" width="12" height="11.5" viewBox="0 0 12 11.5"><path d="M4.6 0.8 L9.2 5.2 L5.4 8.6 L1.2 4.6 Z" fill="#fff" stroke="#505050" stroke-width="0.9"/><path d="M8.6 2.6 C10.2 3.2 10.6 5 10.2 6.6" fill="none" stroke="#2b78c8" stroke-width="1.2"/><rect x="0" y="9" width="12" height="2.5" fill="#ffef00"/></svg>
<svg class="b" style="left:237.20px;top:82.20px;" width="6.2" height="4.4" viewBox="0 0 6.2 4.4"><path d="M1 1 L3.1 3.4 L5.2 1" fill="none" stroke="#444" stroke-width="1"/></svg>
<span class="t" style="top:77.07px;font-size:11.20px;left:250.60px">A</span>
<div class="b " style="left:248.50px;top:87.00px;width:11.60px;height:2.60px;background:#f00000"></div>
<svg class="b" style="left:264.00px;top:82.20px;" width="6.2" height="4.4" viewBox="0 0 6.2 4.4"><path d="M1 1 L3.1 3.4 L5.2 1" fill="none" stroke="#444" stroke-width="1"/></svg>
<span class="t" style="top:103.87px;font-size:8.60px;letter-spacing:0.082px;left:182.94px">Font</span>
<svg class="b" style="left:270.00px;top:105.00px;" width="5.8" height="5.8" viewBox="0 0 5.8 5.8"><path d="M0.5 4 V0.5 H4" fill="none" stroke="#555" stroke-width="1"/><path d="M2 2 L5.2 5.2 M5.2 2.4 V5.2 H2.4" fill="none" stroke="#555" stroke-width="1"/></svg>
<div class="b " style="left:278.00px;top:48.00px;width:1.00px;height:62.00px;background:#c8c6c4"></div>
<svg class="b" style="left:287.00px;top:55.00px;" width="12" height="12" viewBox="0 0 12 12"><path d="M0 0.5 H10.5 M1.5 3.5 H9 M0 6.5 H10.5" stroke="#4a4a4a" stroke-width="1" fill="none"/></svg>
<svg class="b" style="left:303.00px;top:58.00px;" width="12" height="12" viewBox="0 0 12 12"><path d="M0 0.5 H10.5 M1.5 3.5 H9 M0 6.5 H10.5" stroke="#4a4a4a" stroke-width="1" fill="none"/></svg>
<div class="b " style="left:316.00px;top:53.50px;width:15.40px;height:16.00px;background:#c8c6c4"></div>
<svg class="b" style="left:318.50px;top:60.00px;" width="12" height="12" viewBox="0 0 12 12"><path d="M0 0.5 H10.5 M1.5 3.5 H9 M0 6.5 H10.5" stroke="#4a4a4a" stroke-width="1" fill="none"/></svg>
<div class="b " style="left:334.00px;top:55.00px;width:1.00px;height:13.00px;background:#d2d0ce"></div>
<svg class="b" style="left:340.00px;top:55.40px;" width="12.5" height="12" viewBox="0 0 12.5 12"><text x="0" y="0" font-size="7.4" font-family="Liberation Sans,sans-serif" fill="#444" transform="translate(1.6 8.2) rotate(-42)">ab</text><path d="M3.4 11.4 L10.6 4.6 M7.4 4.2 H11 V7.8" fill="none" stroke="#2b88d8" stroke-width="1"/></svg>
<svg class="b" style="left:354.00px;top:59.40px;" width="6.2" height="4.4" viewBox="0 0 6.2 4.4"><path d="M1 1 L3.1 3.4 L5.2 1" fill="none" stroke="#444" stroke-width="1"/></svg>
<svg class="b" style="left:287.00px;top:79.00px;" width="12" height="12" viewBox="0 0 12 12"><path d="M0 0.5 H10.5 M0 3.5 H7 M0 6.5 H10.5 M0 9.5 H7" stroke="#4a4a4a" stroke-width="1" fill="none"/></svg>
<svg class="b" style="left:303.00px;top:79.00px;" width="12" height="12" viewBox="0 0 12 12"><path d="M0 0.5 H10.5 M1.8 3.5 H8.7 M0 6.5 H10.5 M1.8 9.5 H8.7" stroke="#4a4a4a" stroke-width="1" fill="none"/></svg>
<svg class="b" style="left:318.50px;top:79.00px;" width="12" height="12" viewBox="0 0 12 12"><path d="M0 0.5 H10.5 M3.5 3.5 H10.5 M0 6.5 H10.5 M3.5 9.5 H10.5" stroke="#4a4a4a" stroke-width="1" fill="none"/></svg>
<div class="b " style="left:334.00px;top:77.00px;width:1.00px;height:14.00px;background:#d2d0ce"></div>
<svg class="b" style="left:340.50px;top:79.00px;" width="10.6" height="10.6" viewBox="0 0 10.6 10.6"><path d="M0 0.5 H10.2 M5 3.5 H10.2 M5 6.5 H10.2 M0 9.5 H10.2" stroke="#4a4a4a" stroke-width="1" fill="none"/><path d="M0.4 5 H4 M1.8 3.4 L0.2 5 L1.8 6.6" fill="none" stroke="#2b88d8" stroke-width="1"/></svg>
<svg class="b" style="left:356.50px;top:79.00px;" width="10.6" height="10.6" viewBox="0 0 10.6 10.6"><path d="M0 0.5 H10.2 M5 3.5 H10.2 M5 6.5 H10.2 M0 9.5 H10.2" stroke="#4a4a4a" stroke-width="1" fill="none"/><path d="M0.2 5 H3.8 M2.4 3.4 L4 5 L2.4 6.6" fill="none" stroke="#2b88d8" stroke-width="1"/></svg>
<div class="b " style="left:372.00px;top:52.00px;width:1.00px;height:41.00px;background:#d2d0ce"></div>
<svg class="b" style="left:377.60px;top:55.60px;" width="12.5" height="11.5" viewBox="0 0 12.5 11.5"><text x="1.0" y="5.8" font-size="7.6" font-family="Liberation Sans,sans-serif" fill="#444">ab</text><text x="1.0" y="11.2" font-size="7.6" font-family="Liberation Sans,sans-serif" fill="#444">c</text><path d="M9.6 2.6 C12.4 4.4 11.4 9 6.4 8.8 M8 7 L6 8.8 L8 10.6" fill="none" stroke="#2b88d8" stroke-width="1"/></svg>
<span class="t" style="top:58.27px;font-size:8.60px;letter-spacing:-0.149px;left:391.44px">Wrap Text</span>
<svg class="b" style="left:378.00px;top:78.40px;" width="10.8" height="10.8" viewBox="0 0 10.8 10.8"><rect x="0.5" y="0.5" width="9.8" height="9.8" fill="#fff" stroke="#555" stroke-width="0.9"/><path d="M0.5 2.9 H10.3 M0.5 7.9 H10.3 M3.6 0.5 V2.9 M7.2 0.5 V2.9 M3.6 7.9 V10.3 M7.2 7.9 V10.3" stroke="#777" stroke-width="0.7"/><rect x="0.6" y="3.1" width="9.6" height="4.6" fill="#cfe6f8" stroke="#2b88d8" stroke-width="0.7"/><path d="M1.8 5.4 H9 M3.2 4 L1.8 5.4 L3.2 6.8 M7.6 4 L9 5.4 L7.6 6.8" fill="none" stroke="#1f7bd0" stroke-width="1"/></svg>
<span class="t" style="top:80.77px;font-size:8.60px;letter-spacing:0.026px;left:391.44px">Merge &amp; Center</span>
<svg class="b" style="left:458.60px;top:82.20px;" width="6.2" height="4.4" viewBox="0 0 6.2 4.4"><path d="M1 1 L3.1 3.4 L5.2 1" fill="none" stroke="#444" stroke-width="1"/></svg>
<span class="t" style="top:103.87px;font-size:8.60px;letter-spacing:-0.021px;left:351.44px">Alignment</span>
<svg class="b" style="left:465.00px;top:105.00px;" width="5.8" height="5.8" viewBox="0 0 5.8 5.8"><path d="M0.5 4 V0.5 H4" fill="none" stroke="#555" stroke-width="1"/><path d="M2 2 L5.2 5.2 M5.2 2.4 V5.2 H2.4" fill="none" stroke="#555" stroke-width="1"/></svg>
<div class="b " style="left:472.00px;top:48.00px;width:1.00px;height:62.00px;background:#c8c6c4"></div>
</div>
<div class="sec formulabar">
<div class="b " style="left:0.00px;top:113.00px;width:475.00px;height:5.00px;background:linear-gradient(#dadada,#e6e6e6)"></div>
<div class="b " style="left:0.00px;top:118.00px;width:475.00px;height:29.50px;background:#e6e6e6"></div>
<div class="b " style="left:3.50px;top:121.30px;width:72.50px;height:18.20px;background:#fff;border:1px solid #dcdcdc;box-sizing:border-box"></div>
<span class="t" style="top:126.39px;font-size:9.40px;color:#333;letter-spacing:0.172px;left:7.89px">D1</span>
<svg class="b" style="left:66.30px;top:128.40px;" width="5" height="3" viewBox="0 0 5 3"><path d="M0 0 H5 L2.5 2.8 Z" fill="#666"/></svg>
<div class="b " style="left:86.60px;top:127.60px;width:1.00px;height:1.00px;background:#999"></div>
<div class="b " style="left:86.60px;top:130.40px;width:1.00px;height:1.00px;background:#999"></div>
<div class="b " style="left:86.60px;top:133.20px;width:1.00px;height:1.00px;background:#999"></div>
<div class="b " style="left:97.50px;top:121.30px;width:78.30px;height:18.20px;background:#fff;border:1px solid #e0e0e0;box-sizing:border-box"></div>
<svg class="b" style="left:107.40px;top:127.40px;" width="7.4" height="7.4" viewBox="0 0 7.4 7.4"><path d="M0.4 0.4 L7 7 M7 0.4 L0.4 7" stroke="#b4b4b4" stroke-width="1"/></svg>
<svg class="b" style="left:133.00px;top:127.20px;" width="9.4" height="7.6" viewBox="0 0 9.4 7.6"><path d="M0.4 4.4 L3 7 L9 0.5" fill="none" stroke="#b0b0b0" stroke-width="1.4"/></svg>
<span class="t" style="top:125.75px;font-size:10.40px;font-family:'Liberation Serif',serif;-webkit-text-stroke:0px currentColor;left:159.40px"><i>f</i></span>
<span class="t" style="top:129.96px;font-size:6.60px;font-family:'Liberation Serif',serif;-webkit-text-stroke:0.1px currentColor;left:162.60px"><i>x</i></span>
<div class="b " style="left:178.50px;top:121.30px;width:300.00px;height:18.20px;background:#fff;border:1px solid #e0e0e0;box-sizing:border-box"></div>
<span class="t" style="top:126.90px;font-size:8.80px;color:#222;left:187.00px">15</span>
</div>
<div class="sec grid">
<div class="b " style="left:0.00px;top:147.00px;width:475.00px;height:558.00px;background:#fff"></div>
<div class="b " style="left:157.00px;top:175.08px;width:42.20px;height:530.42px;background:#c8c8c8"></div>
<div class="b " style="left:63.30px;top:161.00px;width:1.00px;height:544.00px;background:#e3e3e3"></div>
<div class="b " style="left:108.90px;top:161.00px;width:1.00px;height:544.00px;background:#e3e3e3"></div>
<div class="b " style="left:154.50px;top:161.00px;width:1.00px;height:544.00px;background:#e3e3e3"></div>
<div class="b " style="left:200.10px;top:161.00px;width:1.00px;height:544.00px;background:#e3e3e3"></div>
<div class="b " style="left:245.70px;top:161.00px;width:1.00px;height:544.00px;background:#e3e3e3"></div>
<div class="b " style="left:291.30px;top:161.00px;width:1.00px;height:544.00px;background:#e3e3e3"></div>
<div class="b " style="left:336.90px;top:161.00px;width:1.00px;height:544.00px;background:#e3e3e3"></div>
<div class="b " style="left:382.50px;top:161.00px;width:1.00px;height:544.00px;background:#e3e3e3"></div>
<div class="b " style="left:428.10px;top:161.00px;width:1.00px;height:544.00px;background:#e3e3e3"></div>
<div class="b " style="left:473.70px;top:161.00px;width:1.00px;height:544.00px;background:#e3e3e3"></div>
<div class="b " style="left:18.20px;top:174.08px;width:475.00px;height:1.00px;background:#e3e3e3"></div>
<div class="b " style="left:18.20px;top:188.36px;width:475.00px;height:1.00px;background:#e3e3e3"></div>
<div class="b " style="left:18.20px;top:202.64px;width:475.00px;height:1.00px;background:#e3e3e3"></div>
<div class="b " style="left:18.20px;top:216.92px;width:475.00px;height:1.00px;background:#e3e3e3"></div>
<div class="b " style="left:18.20px;top:231.20px;width:475.00px;height:1.00px;background:#e3e3e3"></div>
<div class="b " style="left:18.20px;top:245.48px;width:475.00px;height:1.00px;background:#e3e3e3"></div>
<div class="b " style="left:18.20px;top:259.76px;width:475.00px;height:1.00px;background:#e3e3e3"></div>
<div class="b " style="left:18.20px;top:274.04px;width:475.00px;height:1.00px;background:#e3e3e3"></div>
<div class="b " style="left:18.20px;top:288.32px;width:475.00px;height:1.00px;background:#e3e3e3"></div>
<div class="b " style="left:18.20px;top:302.60px;width:475.00px;height:1.00px;background:#e3e3e3"></div>
<div class="b " style="left:18.20px;top:316.88px;width:475.00px;height:1.00px;background:#e3e3e3"></div>
<div class="b " style="left:18.20px;top:331.16px;width:475.00px;height:1.00px;background:#e3e3e3"></div>
<div class="b " style="left:18.20px;top:345.44px;width:475.00px;height:1.00px;background:#e3e3e3"></div>
<div class="b " style="left:18.20px;top:359.72px;width:475.00px;height:1.00px;background:#e3e3e3"></div>
<div class="b " style="left:18.20px;top:374.00px;width:475.00px;height:1.00px;background:#e3e3e3"></div>
<div class="b " style="left:18.20px;top:388.28px;width:475.00px;height:1.00px;background:#e3e3e3"></div>
<div class="b " style="left:18.20px;top:402.56px;width:475.00px;height:1.00px;background:#e3e3e3"></div>
<div class="b " style="left:18.20px;top:416.84px;width:475.00px;height:1.00px;background:#e3e3e3"></div>
<div class="b " style="left:18.20px;top:431.12px;width:475.00px;height:1.00px;background:#e3e3e3"></div>
<div class="b " style="left:18.20px;top:445.40px;width:475.00px;height:1.00px;background:#e3e3e3"></div>
<div class="b " style="left:18.20px;top:459.68px;width:475.00px;height:1.00px;background:#e3e3e3"></div>
<div class="b " style="left:18.20px;top:473.96px;width:475.00px;height:1.00px;background:#e3e3e3"></div>
<div class="b " style="left:18.20px;top:488.24px;width:475.00px;height:1.00px;background:#e3e3e3"></div>
<div class="b " style="left:18.20px;top:502.52px;width:475.00px;height:1.00px;background:#e3e3e3"></div>
<div class="b " style="left:18.20px;top:516.80px;width:475.00px;height:1.00px;background:#e3e3e3"></div>
<div class="b " style="left:18.20px;top:531.08px;width:475.00px;height:1.00px;background:#e3e3e3"></div>
<div class="b " style="left:18.20px;top:545.36px;width:475.00px;height:1.00px;background:#e3e3e3"></div>
<div class="b " style="left:18.20px;top:559.64px;width:475.00px;height:1.00px;background:#e3e3e3"></div>
<div class="b " style="left:18.20px;top:573.92px;width:475.00px;height:1.00px;background:#e3e3e3"></div>
<div class="b " style="left:18.20px;top:588.20px;width:475.00px;height:1.00px;background:#e3e3e3"></div>
<div class="b " style="left:18.20px;top:602.48px;width:475.00px;height:1.00px;background:#e3e3e3"></div>
<div class="b " style="left:18.20px;top:616.76px;width:475.00px;height:1.00px;background:#e3e3e3"></div>
<div class="b " style="left:18.20px;top:631.04px;width:475.00px;height:1.00px;background:#e3e3e3"></div>
<div class="b " style="left:18.20px;top:645.32px;width:475.00px;height:1.00px;background:#e3e3e3"></div>
<div class="b " style="left:18.20px;top:659.60px;width:475.00px;height:1.00px;background:#e3e3e3"></div>
<div class="b " style="left:18.20px;top:673.88px;width:475.00px;height:1.00px;background:#e3e3e3"></div>
<div class="b " style="left:18.20px;top:688.16px;width:475.00px;height:1.00px;background:#e3e3e3"></div>
<div class="b " style="left:18.20px;top:702.44px;width:475.00px;height:1.00px;background:#e3e3e3"></div>
<div class="b " style="left:18.20px;top:716.72px;width:475.00px;height:1.00px;background:#e3e3e3"></div>
<div class="b " style="left:157.00px;top:188.36px;width:42.20px;height:1.00px;background:#b4b4b4"></div>
<div class="b " style="left:157.00px;top:202.64px;width:42.20px;height:1.00px;background:#b4b4b4"></div>
<div class="b " style="left:157.00px;top:216.92px;width:42.20px;height:1.00px;background:#b4b4b4"></div>
<div class="b " style="left:157.00px;top:231.20px;width:42.20px;height:1.00px;background:#b4b4b4"></div>
<div class="b " style="left:157.00px;top:245.48px;width:42.20px;height:1.00px;background:#b4b4b4"></div>
<div class="b " style="left:157.00px;top:259.76px;width:42.20px;height:1.00px;background:#b4b4b4"></div>
<div class="b " style="left:157.00px;top:274.04px;width:42.20px;height:1.00px;background:#b4b4b4"></div>
<div class="b " style="left:157.00px;top:288.32px;width:42.20px;height:1.00px;background:#b4b4b4"></div>
<div class="b " style="left:157.00px;top:302.60px;width:42.20px;height:1.00px;background:#b4b4b4"></div>
<div class="b " style="left:157.00px;top:316.88px;width:42.20px;height:1.00px;background:#b4b4b4"></div>
<div class="b " style="left:157.00px;top:331.16px;width:42.20px;height:1.00px;background:#b4b4b4"></div>
<div class="b " style="left:157.00px;top:345.44px;width:42.20px;height:1.00px;background:#b4b4b4"></div>
<div class="b " style="left:157.00px;top:359.72px;width:42.20px;height:1.00px;background:#b4b4b4"></div>
<div class="b " style="left:157.00px;top:374.00px;width:42.20px;height:1.00px;background:#b4b4b4"></div>
<div class="b " style="left:157.00px;top:388.28px;width:42.20px;height:1.00px;background:#b4b4b4"></div>
<div class="b " style="left:157.00px;top:402.56px;width:42.20px;height:1.00px;background:#b4b4b4"></div>
<div class="b " style="left:157.00px;top:416.84px;width:42.20px;height:1.00px;background:#b4b4b4"></div>
<div class="b " style="left:157.00px;top:431.12px;width:42.20px;height:1.00px;background:#b4b4b4"></div>
<div class="b " style="left:157.00px;top:445.40px;width:42.20px;height:1.00px;background:#b4b4b4"></div>
<div class="b " style="left:157.00px;top:459.68px;width:42.20px;height:1.00px;background:#b4b4b4"></div>
<div class="b " style="left:157.00px;top:473.96px;width:42.20px;height:1.00px;background:#b4b4b4"></div>
<div class="b " style="left:157.00px;top:488.24px;width:42.20px;height:1.00px;background:#b4b4b4"></div>
<div class="b " style="left:157.00px;top:502.52px;width:42.20px;height:1.00px;background:#b4b4b4"></div>
<div class="b " style="left:157.00px;top:516.80px;width:42.20px;height:1.00px;background:#b4b4b4"></div>
<div class="b " style="left:157.00px;top:531.08px;width:42.20px;height:1.00px;background:#b4b4b4"></div>
<div class="b " style="left:157.00px;top:545.36px;width:42.20px;height:1.00px;background:#b4b4b4"></div>
<div class="b " style="left:157.00px;top:559.64px;width:42.20px;height:1.00px;background:#b4b4b4"></div>
<div class="b " style="left:157.00px;top:573.92px;width:42.20px;height:1.00px;background:#b4b4b4"></div>
<div class="b " style="left:157.00px;top:588.20px;width:42.20px;height:1.00px;background:#b4b4b4"></div>
<div class="b " style="left:157.00px;top:602.48px;width:42.20px;height:1.00px;background:#b4b4b4"></div>
<div class="b " style="left:157.00px;top:616.76px;width:42.20px;height:1.00px;background:#b4b4b4"></div>
<div class="b " style="left:157.00px;top:631.04px;width:42.20px;height:1.00px;background:#b4b4b4"></div>
<div class="b " style="left:157.00px;top:645.32px;width:42.20px;height:1.00px;background:#b4b4b4"></div>
<div class="b " style="left:157.00px;top:659.60px;width:42.20px;height:1.00px;background:#b4b4b4"></div>
<div class="b " style="left:157.00px;top:673.88px;width:42.20px;height:1.00px;background:#b4b4b4"></div>
<div class="b " style="left:157.00px;top:688.16px;width:42.20px;height:1.00px;background:#b4b4b4"></div>
<div class="b " style="left:157.00px;top:702.44px;width:42.20px;height:1.00px;background:#b4b4b4"></div>
<div class="b " style="left:0.00px;top:147.00px;width:475.00px;height:13.40px;background:#e6e6e6"></div>
<span class="t" style="top:149.77px;font-size:8.95px;-webkit-text-stroke:0.05px currentColor;left:41.00px;width:0;display:flex;justify-content:center">A</span>
<span class="t" style="top:149.77px;font-size:8.95px;-webkit-text-stroke:0.05px currentColor;left:86.60px;width:0;display:flex;justify-content:center">B</span>
<span class="t" style="top:149.77px;font-size:8.95px;-webkit-text-stroke:0.05px currentColor;left:132.20px;width:0;display:flex;justify-content:center">C</span>
<div class="b " style="left:155.60px;top:147.00px;width:45.20px;height:13.20px;background:#9fd5b7"></div>
<span class="t" style="top:149.77px;font-size:8.95px;color:#217346;-webkit-text-stroke:0.05px currentColor;left:177.80px;width:0;display:flex;justify-content:center">D</span>
<span class="t" style="top:149.77px;font-size:8.95px;-webkit-text-stroke:0.05px currentColor;left:223.40px;width:0;display:flex;justify-content:center">E</span>
<span class="t" style="top:149.77px;font-size:8.95px;-webkit-text-stroke:0.05px currentColor;left:269.00px;width:0;display:flex;justify-content:center">F</span>
<span class="t" style="top:149.77px;font-size:8.95px;-webkit-text-stroke:0.05px currentColor;left:314.60px;width:0;display:flex;justify-content:center">G</span>
<span class="t" style="top:149.77px;font-size:8.95px;-webkit-text-stroke:0.05px currentColor;left:360.20px;width:0;display:flex;justify-content:center">H</span>
<span class="t" style="top:149.77px;font-size:8.95px;-webkit-text-stroke:0.05px currentColor;left:405.80px;width:0;display:flex;justify-content:center">I</span>
<span class="t" style="top:149.77px;font-size:8.95px;-webkit-text-stroke:0.05px currentColor;left:451.40px;width:0;display:flex;justify-content:center">J</span>
<div class="b " style="left:17.70px;top:147.00px;width:1.00px;height:13.00px;background:#cfcfcf"></div>
<div class="b " style="left:63.30px;top:147.00px;width:1.00px;height:13.00px;background:#cfcfcf"></div>
<div class="b " style="left:108.90px;top:147.00px;width:1.00px;height:13.00px;background:#cfcfcf"></div>
<div class="b " style="left:154.50px;top:147.00px;width:1.00px;height:13.00px;background:#cfcfcf"></div>
<div class="b " style="left:200.10px;top:147.00px;width:1.00px;height:13.00px;background:#cfcfcf"></div>
<div class="b " style="left:245.70px;top:147.00px;width:1.00px;height:13.00px;background:#cfcfcf"></div>
<div class="b " style="left:291.30px;top:147.00px;width:1.00px;height:13.00px;background:#cfcfcf"></div>
<div class="b " style="left:336.90px;top:147.00px;width:1.00px;height:13.00px;background:#cfcfcf"></div>
<div class="b " style="left:382.50px;top:147.00px;width:1.00px;height:13.00px;background:#cfcfcf"></div>
<div class="b " style="left:428.10px;top:147.00px;width:1.00px;height:13.00px;background:#cfcfcf"></div>
<div class="b " style="left:473.70px;top:147.00px;width:1.00px;height:13.00px;background:#cfcfcf"></div>
<svg class="b" style="left:6.60px;top:150.60px;" width="9" height="9" viewBox="0 0 9 9"><path d="M8.6 0.4 V8.6 H0.4 Z" fill="#b4b4b4"/></svg>
<div class="b " style="left:18.20px;top:160.00px;width:475.00px;height:1.00px;background:#cfcfcf"></div>
<div class="b " style="left:0.00px;top:160.00px;width:18.20px;height:545.50px;background:#e6e6e6"></div>
<div class="b " style="left:0.00px;top:160.30px;width:18.20px;height:14.78px;background:#d2d2d2"></div>
<div class="b " style="left:0.00px;top:174.08px;width:18.20px;height:1.00px;background:#c6c6c6"></div>
<span class="t" style="top:164.35px;font-size:8.95px;color:#217346;-webkit-text-stroke:0.05px currentColor;left:9.10px;width:0;display:flex;justify-content:center">1</span>
<div class="b " style="left:0.00px;top:174.58px;width:18.20px;height:14.78px;background:#d2d2d2"></div>
<div class="b " style="left:0.00px;top:188.36px;width:18.20px;height:1.00px;background:#c6c6c6"></div>
<span class="t" style="top:178.63px;font-size:8.95px;color:#217346;-webkit-text-stroke:0.05px currentColor;left:9.10px;width:0;display:flex;justify-content:center">2</span>
<div class="b " style="left:0.00px;top:188.86px;width:18.20px;height:14.78px;background:#d2d2d2"></div>
<div class="b " style="left:0.00px;top:202.64px;width:18.20px;height:1.00px;background:#c6c6c6"></div>
<span class="t" style="top:192.91px;font-size:8.95px;color:#217346;-webkit-text-stroke:0.05px currentColor;left:9.10px;width:0;display:flex;justify-content:center">3</span>
<div class="b " style="left:0.00px;top:203.14px;width:18.20px;height:14.78px;background:#d2d2d2"></div>
<div class="b " style="left:0.00px;top:216.92px;width:18.20px;height:1.00px;background:#c6c6c6"></div>
<span class="t" style="top:207.19px;font-size:8.95px;color:#217346;-webkit-text-stroke:0.05px currentColor;left:9.10px;width:0;display:flex;justify-content:center">4</span>
<div class="b " style="left:0.00px;top:217.42px;width:18.20px;height:14.78px;background:#d2d2d2"></div>
<div class="b " style="left:0.00px;top:231.20px;width:18.20px;height:1.00px;background:#c6c6c6"></div>
<span class="t" style="top:221.47px;font-size:8.95px;color:#217346;-webkit-text-stroke:0.05px currentColor;left:9.10px;width:0;display:flex;justify-content:center">5</span>
<div class="b " style="left:0.00px;top:231.70px;width:18.20px;height:14.78px;background:#d2d2d2"></div>
<div class="b " style="left:0.00px;top:245.48px;width:18.20px;height:1.00px;background:#c6c6c6"></div>
<span class="t" style="top:235.75px;font-size:8.95px;color:#217346;-webkit-text-stroke:0.05px currentColor;left:9.10px;width:0;display:flex;justify-content:center">6</span>
<div class="b " style="left:0.00px;top:245.98px;width:18.20px;height:14.78px;background:#d2d2d2"></div>
<div class="b " style="left:0.00px;top:259.76px;width:18.20px;height:1.00px;background:#c6c6c6"></div>
<span class="t" style="top:250.03px;font-size:8.95px;color:#217346;-webkit-text-stroke:0.05px currentColor;left:9.10px;width:0;display:flex;justify-content:center">7</span>
<div class="b " style="left:0.00px;top:260.26px;width:18.20px;height:14.78px;background:#d2d2d2"></div>
<div class="b " style="left:0.00px;top:274.04px;width:18.20px;height:1.00px;background:#c6c6c6"></div>
<span class="t" style="top:264.31px;font-size:8.95px;color:#217346;-webkit-text-stroke:0.05px currentColor;left:9.10px;width:0;display:flex;justify-content:center">8</span>
<div class="b " style="left:0.00px;top:274.54px;width:18.20px;height:14.78px;background:#d2d2d2"></div>
<div class="b " style="left:0.00px;top:288.32px;width:18.20px;height:1.00px;background:#c6c6c6"></div>
<span class="t" style="top:278.59px;font-size:8.95px;color:#217346;-webkit-text-stroke:0.05px currentColor;left:9.10px;width:0;display:flex;justify-content:center">9</span>
<div class="b " style="left:0.00px;top:288.82px;width:18.20px;height:14.78px;background:#d2d2d2"></div>
<div class="b " style="left:0.00px;top:302.60px;width:18.20px;height:1.00px;background:#c6c6c6"></div>
<span class="t" style="top:292.87px;font-size:8.95px;color:#217346;-webkit-text-stroke:0.05px currentColor;left:9.10px;width:0;display:flex;justify-content:center">10</span>
<div class="b " style="left:0.00px;top:303.10px;width:18.20px;height:14.78px;background:#d2d2d2"></div>
<div class="b " style="left:0.00px;top:316.88px;width:18.20px;height:1.00px;background:#c6c6c6"></div>
<span class="t" style="top:307.15px;font-size:8.95px;color:#217346;-webkit-text-stroke:0.05px currentColor;left:9.10px;width:0;display:flex;justify-content:center">11</span>
<div class="b " style="left:0.00px;top:317.38px;width:18.20px;height:14.78px;background:#d2d2d2"></div>
<div class="b " style="left:0.00px;top:331.16px;width:18.20px;height:1.00px;background:#c6c6c6"></div>
<span class="t" style="top:321.43px;font-size:8.95px;color:#217346;-webkit-text-stroke:0.05px currentColor;left:9.10px;width:0;display:flex;justify-content:center">12</span>
<div class="b " style="left:0.00px;top:331.66px;width:18.20px;height:14.78px;background:#d2d2d2"></div>
<div class="b " style="left:0.00px;top:345.44px;width:18.20px;height:1.00px;background:#c6c6c6"></div>
<span class="t" style="top:335.71px;font-size:8.95px;color:#217346;-webkit-text-stroke:0.05px currentColor;left:9.10px;width:0;display:flex;justify-content:center">13</span>
<div class="b " style="left:0.00px;top:345.94px;width:18.20px;height:14.78px;background:#d2d2d2"></div>
<div class="b " style="left:0.00px;top:359.72px;width:18.20px;height:1.00px;background:#c6c6c6"></div>
<span class="t" style="top:349.99px;font-size:8.95px;color:#217346;-webkit-text-stroke:0.05px currentColor;left:9.10px;width:0;display:flex;justify-content:center">14</span>
<div class="b " style="left:0.00px;top:360.22px;width:18.20px;height:14.78px;background:#d2d2d2"></div>
<div class="b " style="left:0.00px;top:374.00px;width:18.20px;height:1.00px;background:#c6c6c6"></div>
<span class="t" style="top:364.27px;font-size:8.95px;color:#217346;-webkit-text-stroke:0.05px currentColor;left:9.10px;width:0;display:flex;justify-content:center">15</span>
<div class="b " style="left:0.00px;top:374.50px;width:18.20px;height:14.78px;background:#d2d2d2"></div>
<div class="b " style="left:0.00px;top:388.28px;width:18.20px;height:1.00px;background:#c6c6c6"></div>
<span class="t" style="top:378.55px;font-size:8.95px;color:#217346;-webkit-text-stroke:0.05px currentColor;left:9.10px;width:0;display:flex;justify-content:center">16</span>
<div class="b " style="left:0.00px;top:388.78px;width:18.20px;height:14.78px;background:#d2d2d2"></div>
<div class="b " style="left:0.00px;top:402.56px;width:18.20px;height:1.00px;background:#c6c6c6"></div>
<span class="t" style="top:392.83px;font-size:8.95px;color:#217346;-webkit-text-stroke:0.05px currentColor;left:9.10px;width:0;display:flex;justify-content:center">17</span>
<div class="b " style="left:0.00px;top:403.06px;width:18.20px;height:14.78px;background:#d2d2d2"></div>
<div class="b " style="left:0.00px;top:416.84px;width:18.20px;height:1.00px;background:#c6c6c6"></div>
<span class="t" style="top:407.11px;font-size:8.95px;color:#217346;-webkit-text-stroke:0.05px currentColor;left:9.10px;width:0;display:flex;justify-content:center">18</span>
<div class="b " style="left:0.00px;top:417.34px;width:18.20px;height:14.78px;background:#d2d2d2"></div>
<div class="b " style="left:0.00px;top:431.12px;width:18.20px;height:1.00px;background:#c6c6c6"></div>
<span class="t" style="top:421.39px;font-size:8.95px;color:#217346;-webkit-text-stroke:0.05px currentColor;left:9.10px;width:0;display:flex;justify-content:center">19</span>
<div class="b " style="left:0.00px;top:431.62px;width:18.20px;height:14.78px;background:#d2d2d2"></div>
<div class="b " style="left:0.00px;top:445.40px;width:18.20px;height:1.00px;background:#c6c6c6"></div>
<span class="t" style="top:435.67px;font-size:8.95px;color:#217346;-webkit-text-stroke:0.05px currentColor;left:9.10px;width:0;display:flex;justify-content:center">20</span>
<div class="b " style="left:0.00px;top:445.90px;width:18.20px;height:14.78px;background:#d2d2d2"></div>
<div class="b " style="left:0.00px;top:459.68px;width:18.20px;height:1.00px;background:#c6c6c6"></div>
<span class="t" style="top:449.95px;font-size:8.95px;color:#217346;-webkit-text-stroke:0.05px currentColor;left:9.10px;width:0;display:flex;justify-content:center">21</span>
<div class="b " style="left:0.00px;top:460.18px;width:18.20px;height:14.78px;background:#d2d2d2"></div>
<div class="b " style="left:0.00px;top:473.96px;width:18.20px;height:1.00px;background:#c6c6c6"></div>
<span class="t" style="top:464.23px;font-size:8.95px;color:#217346;-webkit-text-stroke:0.05px currentColor;left:9.10px;width:0;display:flex;justify-content:center">22</span>
<div class="b " style="left:0.00px;top:474.46px;width:18.20px;height:14.78px;background:#d2d2d2"></div>
<div class="b " style="left:0.00px;top:488.24px;width:18.20px;height:1.00px;background:#c6c6c6"></div>
<span class="t" style="top:478.51px;font-size:8.95px;color:#217346;-webkit-text-stroke:0.05px currentColor;left:9.10px;width:0;display:flex;justify-content:center">23</span>
<div class="b " style="left:0.00px;top:488.74px;width:18.20px;height:14.78px;background:#d2d2d2"></div>
<div class="b " style="left:0.00px;top:502.52px;width:18.20px;height:1.00px;background:#c6c6c6"></div>
<span class="t" style="top:492.79px;font-size:8.95px;color:#217346;-webkit-text-stroke:0.05px currentColor;left:9.10px;width:0;display:flex;justify-content:center">24</span>
<div class="b " style="left:0.00px;top:503.02px;width:18.20px;height:14.78px;background:#d2d2d2"></div>
<div class="b " style="left:0.00px;top:516.80px;width:18.20px;height:1.00px;background:#c6c6c6"></div>
<span class="t" style="top:507.07px;font-size:8.95px;color:#217346;-webkit-text-stroke:0.05px currentColor;left:9.10px;width:0;display:flex;justify-content:center">25</span>
<div class="b " style="left:0.00px;top:517.30px;width:18.20px;height:14.78px;background:#d2d2d2"></div>
<div class="b " style="left:0.00px;top:531.08px;width:18.20px;height:1.00px;background:#c6c6c6"></div>
<span class="t" style="top:521.35px;font-size:8.95px;color:#217346;-webkit-text-stroke:0.05px currentColor;left:9.10px;width:0;display:flex;justify-content:center">26</span>
<div class="b " style="left:0.00px;top:531.58px;width:18.20px;height:14.78px;background:#d2d2d2"></div>
<div class="b " style="left:0.00px;top:545.36px;width:18.20px;height:1.00px;background:#c6c6c6"></div>
<span class="t" style="top:535.63px;font-size:8.95px;color:#217346;-webkit-text-stroke:0.05px currentColor;left:9.10px;width:0;display:flex;justify-content:center">27</span>
<div class="b " style="left:0.00px;top:545.86px;width:18.20px;height:14.78px;background:#d2d2d2"></div>
<div class="b " style="left:0.00px;top:559.64px;width:18.20px;height:1.00px;background:#c6c6c6"></div>
<span class="t" style="top:549.91px;font-size:8.95px;color:#217346;-webkit-text-stroke:0.05px currentColor;left:9.10px;width:0;display:flex;justify-content:center">28</span>
<div class="b " style="left:0.00px;top:560.14px;width:18.20px;height:14.78px;background:#d2d2d2"></div>
<div class="b " style="left:0.00px;top:573.92px;width:18.20px;height:1.00px;background:#c6c6c6"></div>
<span class="t" style="top:564.19px;font-size:8.95px;color:#217346;-webkit-text-stroke:0.05px currentColor;left:9.10px;width:0;display:flex;justify-content:center">29</span>
<div class="b " style="left:0.00px;top:574.42px;width:18.20px;height:14.78px;background:#d2d2d2"></div>
<div class="b " style="left:0.00px;top:588.20px;width:18.20px;height:1.00px;background:#c6c6c6"></div>
<span class="t" style="top:578.47px;font-size:8.95px;color:#217346;-webkit-text-stroke:0.05px currentColor;left:9.10px;width:0;display:flex;justify-content:center">30</span>
<div class="b " style="left:0.00px;top:588.70px;width:18.20px;height:14.78px;background:#d2d2d2"></div>
<div class="b " style="left:0.00px;top:602.48px;width:18.20px;height:1.00px;background:#c6c6c6"></div>
<span class="t" style="top:592.75px;font-size:8.95px;color:#217346;-webkit-text-stroke:0.05px currentColor;left:9.10px;width:0;display:flex;justify-content:center">31</span>
<div class="b " style="left:0.00px;top:602.98px;width:18.20px;height:14.78px;background:#d2d2d2"></div>
<div class="b " style="left:0.00px;top:616.76px;width:18.20px;height:1.00px;background:#c6c6c6"></div>
<span class="t" style="top:607.03px;font-size:8.95px;color:#217346;-webkit-text-stroke:0.05px currentColor;left:9.10px;width:0;display:flex;justify-content:center">32</span>
<div class="b " style="left:0.00px;top:617.26px;width:18.20px;height:14.78px;background:#d2d2d2"></div>
<div class="b " style="left:0.00px;top:631.04px;width:18.20px;height:1.00px;background:#c6c6c6"></div>
<span class="t" style="top:621.31px;font-size:8.95px;color:#217346;-webkit-text-stroke:0.05px currentColor;left:9.10px;width:0;display:flex;justify-content:center">33</span>
<div class="b " style="left:0.00px;top:631.54px;width:18.20px;height:14.78px;background:#d2d2d2"></div>
<div class="b " style="left:0.00px;top:645.32px;width:18.20px;height:1.00px;background:#c6c6c6"></div>
<span class="t" style="top:635.59px;font-size:8.95px;color:#217346;-webkit-text-stroke:0.05px currentColor;left:9.10px;width:0;display:flex;justify-content:center">34</span>
<div class="b " style="left:0.00px;top:645.82px;width:18.20px;height:14.78px;background:#d2d2d2"></div>
<div class="b " style="left:0.00px;top:659.60px;width:18.20px;height:1.00px;background:#c6c6c6"></div>
<span class="t" style="top:649.87px;font-size:8.95px;color:#217346;-webkit-text-stroke:0.05px currentColor;left:9.10px;width:0;display:flex;justify-content:center">35</span>
<div class="b " style="left:0.00px;top:660.10px;width:18.20px;height:14.78px;background:#d2d2d2"></div>
<div class="b " style="left:0.00px;top:673.88px;width:18.20px;height:1.00px;background:#c6c6c6"></div>
<span class="t" style="top:664.15px;font-size:8.95px;color:#217346;-webkit-text-stroke:0.05px currentColor;left:9.10px;width:0;display:flex;justify-content:center">36</span>
<div class="b " style="left:0.00px;top:674.38px;width:18.20px;height:14.78px;background:#d2d2d2"></div>
<div class="b " style="left:0.00px;top:688.16px;width:18.20px;height:1.00px;background:#c6c6c6"></div>
<span class="t" style="top:678.43px;font-size:8.95px;color:#217346;-webkit-text-stroke:0.05px currentColor;left:9.10px;width:0;display:flex;justify-content:center">37</span>
<div class="b " style="left:0.00px;top:688.66px;width:18.20px;height:14.78px;background:#d2d2d2"></div>
<div class="b " style="left:0.00px;top:702.44px;width:18.20px;height:1.00px;background:#c6c6c6"></div>
<span class="t" style="top:692.71px;font-size:8.95px;color:#217346;-webkit-text-stroke:0.05px currentColor;left:9.10px;width:0;display:flex;justify-content:center">38</span>
<div class="b " style="left:0.00px;top:702.94px;width:18.20px;height:14.78px;background:#d2d2d2"></div>
<div class="b " style="left:0.00px;top:716.72px;width:18.20px;height:1.00px;background:#c6c6c6"></div>
<div class="b " style="left:17.00px;top:160.00px;width:2.00px;height:545.50px;background:#2a7d4f"></div>
<span class="t c" style="top:164.35px;right:412.80px">-2.03867</span>
<span class="t c" style="top:164.35px;right:367.20px">34.04961</span>
<span class="t c" style="top:164.35px;right:321.60px">21.27619</span>
<span class="t c" style="top:164.35px;right:276.00px">15</span>
<span class="t c" style="top:178.63px;right:412.80px">3.626944</span>
<span class="t c" style="top:178.63px;right:367.20px">13.94833</span>
<span class="t c" style="top:178.63px;right:321.60px">12.11835</span>
<span class="t c" style="top:178.63px;right:276.00px">15</span>
<span class="t c" style="top:192.91px;right:412.80px">2.773222</span>
<span class="t c" style="top:192.91px;right:367.20px">-0.95301</span>
<span class="t c" style="top:192.91px;right:321.60px">0.935604</span>
<span class="t c" style="top:192.91px;right:276.00px">15</span>
<span class="t c" style="top:207.19px;right:412.80px">15.26861</span>
<span class="t c" style="top:207.19px;right:367.20px">2.92755</span>
<span class="t c" style="top:207.19px;right:321.60px">6.12512</span>
<span class="t c" style="top:207.19px;right:276.00px">15</span>
<span class="t c" style="top:221.47px;right:412.80px">17.985</span>
<span class="t c" style="top:221.47px;right:367.20px">9.524494</span>
<span class="t c" style="top:221.47px;right:321.60px">8.752724</span>
<span class="t c" style="top:221.47px;right:276.00px">15</span>
<span class="t c" style="top:235.75px;right:412.80px">15.26861</span>
<span class="t c" style="top:235.75px;right:367.20px">34.04961</span>
<span class="t c" style="top:235.75px;right:321.60px">20.99831</span>
<span class="t c" style="top:235.75px;right:276.00px">15</span>
<span class="t c" style="top:250.03px;right:412.80px">2.229944</span>
<span class="t c" style="top:250.03px;right:367.20px">36.45555</span>
<span class="t c" style="top:250.03px;right:321.60px">21.52146</span>
<span class="t c" style="top:250.03px;right:276.00px">15</span>
<span class="t c" style="top:264.31px;right:412.80px">-2.03867</span>
<span class="t c" style="top:264.31px;right:367.20px">34.04961</span>
<span class="t c" style="top:264.31px;right:321.60px">21.27619</span>
<span class="t c" style="top:264.31px;right:276.00px">-1</span>
<span class="t c" style="top:278.59px;right:412.80px">-1.37376</span>
<span class="t c" style="top:278.59px;right:367.20px">31.69056</span>
<span class="t c" style="top:278.59px;right:321.60px">20</span>
<span class="t c" style="top:278.59px;right:276.00px">0</span>
<span class="t c" style="top:292.87px;right:412.80px">-1.07543</span>
<span class="t c" style="top:292.87px;right:367.20px">31.7907</span>
<span class="t c" style="top:292.87px;right:321.60px">20</span>
<span class="t c" style="top:292.87px;right:276.00px">0</span>
<span class="t c" style="top:307.15px;right:412.80px">5.644833</span>
<span class="t c" style="top:307.15px;right:367.20px">33.04066</span>
<span class="t c" style="top:307.15px;right:321.60px">20</span>
<span class="t c" style="top:307.15px;right:276.00px">0</span>
<span class="t c" style="top:321.43px;right:412.80px">12.62703</span>
<span class="t c" style="top:321.43px;right:367.20px">32.56097</span>
<span class="t c" style="top:321.43px;right:321.60px">20</span>
<span class="t c" style="top:321.43px;right:276.00px">0</span>
<span class="t c" style="top:335.71px;right:412.80px">15.52477</span>
<span class="t c" style="top:335.71px;right:367.20px">31.73687</span>
<span class="t c" style="top:335.71px;right:321.60px">20</span>
<span class="t c" style="top:335.71px;right:276.00px">-1</span>
<span class="t c" style="top:349.99px;right:412.80px">-0.12142</span>
<span class="t c" style="top:349.99px;right:367.20px">27.24731</span>
<span class="t c" style="top:349.99px;right:321.60px">18</span>
<span class="t c" style="top:349.99px;right:276.00px">0</span>
<span class="t c" style="top:364.27px;right:412.80px">1.949497</span>
<span class="t c" style="top:364.27px;right:367.20px">28.26655</span>
<span class="t c" style="top:364.27px;right:321.60px">18</span>
<span class="t c" style="top:364.27px;right:276.00px">0</span>
<span class="t c" style="top:378.55px;right:412.80px">5.955278</span>
<span class="t c" style="top:378.55px;right:367.20px">29.23772</span>
<span class="t c" style="top:378.55px;right:321.60px">18</span>
<span class="t c" style="top:378.55px;right:276.00px">0</span>
<span class="t c" style="top:392.83px;right:412.80px">11.22215</span>
<span class="t c" style="top:392.83px;right:367.20px">28.75093</span>
<span class="t c" style="top:392.83px;right:321.60px">18</span>
<span class="t c" style="top:392.83px;right:276.00px">0</span>
<span class="t c" style="top:407.11px;right:412.80px">15.56956</span>
<span class="t c" style="top:407.11px;right:367.20px">26.98331</span>
<span class="t c" style="top:407.11px;right:321.60px">18</span>
<span class="t c" style="top:407.11px;right:276.00px">0</span>
<span class="t c" style="top:421.39px;right:412.80px">16.08824</span>
<span class="t c" style="top:421.39px;right:367.20px">26.64955</span>
<span class="t c" style="top:421.39px;right:321.60px">18</span>
<span class="t c" style="top:421.39px;right:276.00px">-1</span>
<span class="t c" style="top:435.67px;right:412.80px">1.003255</span>
<span class="t c" style="top:435.67px;right:367.20px">23.25703</span>
<span class="t c" style="top:435.67px;right:321.60px">17</span>
<span class="t c" style="top:435.67px;right:276.00px">0</span>
<span class="t c" style="top:449.95px;right:412.80px">1.833561</span>
<span class="t c" style="top:449.95px;right:367.20px">24.05265</span>
<span class="t c" style="top:449.95px;right:321.60px">17</span>
<span class="t c" style="top:449.95px;right:276.00px">0</span>
<span class="t c" style="top:464.23px;right:412.80px">4.946333</span>
<span class="t c" style="top:464.23px;right:367.20px">25.74522</span>
<span class="t c" style="top:464.23px;right:321.60px">17</span>
<span class="t c" style="top:464.23px;right:276.00px">0</span>
<span class="t c" style="top:478.51px;right:412.80px">6.759169</span>
<span class="t c" style="top:478.51px;right:367.20px">26.15364</span>
<span class="t c" style="top:478.51px;right:321.60px">17</span>
<span class="t c" style="top:478.51px;right:276.00px">0</span>
<span class="t c" style="top:492.79px;right:412.80px">8.61717</span>
<span class="t c" style="top:492.79px;right:367.20px">26.18551</span>
<span class="t c" style="top:492.79px;right:321.60px">17</span>
<span class="t c" style="top:492.79px;right:276.00px">0</span>
<span class="t c" style="top:507.07px;right:412.80px">10.44295</span>
<span class="t c" style="top:507.07px;right:367.20px">25.8395</span>
<span class="t c" style="top:507.07px;right:321.60px">17</span>
<span class="t c" style="top:507.07px;right:276.00px">0</span>
<span class="t c" style="top:521.35px;right:412.80px">12.81841</span>
<span class="t c" style="top:521.35px;right:367.20px">24.82984</span>
<span class="t c" style="top:521.35px;right:321.60px">17</span>
<span class="t c" style="top:521.35px;right:276.00px">0</span>
<span class="t c" style="top:535.63px;right:412.80px">14.87693</span>
<span class="t c" style="top:535.63px;right:367.20px">23.4468</span>
<span class="t c" style="top:535.63px;right:321.60px">17</span>
<span class="t c" style="top:535.63px;right:276.00px">0</span>
<span class="t c" style="top:549.91px;right:412.80px">16.65222</span>
<span class="t c" style="top:549.91px;right:367.20px">21.55763</span>
<span class="t c" style="top:549.91px;right:321.60px">17</span>
<span class="t c" style="top:549.91px;right:276.00px">-1</span>
<span class="t c" style="top:564.19px;right:412.80px">1.41144</span>
<span class="t c" style="top:564.19px;right:367.20px">21.80881</span>
<span class="t c" style="top:564.19px;right:321.60px">15</span>
<span class="t c" style="top:564.19px;right:276.00px">0</span>
<span class="t c" style="top:578.47px;right:412.80px">2.370224</span>
<span class="t c" style="top:578.47px;right:367.20px">22.00623</span>
<span class="t c" style="top:578.47px;right:321.60px">15</span>
<span class="t c" style="top:578.47px;right:276.00px">0</span>
<span class="t c" style="top:592.75px;right:412.80px">7.815686</span>
<span class="t c" style="top:592.75px;right:367.20px">22.16945</span>
<span class="t c" style="top:592.75px;right:321.60px">15</span>
<span class="t c" style="top:592.75px;right:276.00px">0</span>
<span class="t c" style="top:607.03px;right:412.80px">9.858636</span>
<span class="t c" style="top:607.03px;right:367.20px">21.90159</span>
<span class="t c" style="top:607.03px;right:321.60px">15</span>
<span class="t c" style="top:607.03px;right:276.00px">0</span>
<span class="t c" style="top:621.31px;right:412.80px">11.85955</span>
<span class="t c" style="top:621.31px;right:367.20px">21.40994</span>
<span class="t c" style="top:621.31px;right:321.60px">15</span>
<span class="t c" style="top:621.31px;right:276.00px">0</span>
<span class="t c" style="top:635.59px;right:412.80px">13.794</span>
<span class="t c" style="top:635.59px;right:367.20px">20.70049</span>
<span class="t c" style="top:635.59px;right:321.60px">15</span>
<span class="t c" style="top:635.59px;right:276.00px">0</span>
<span class="t c" style="top:649.87px;right:412.80px">16.96045</span>
<span class="t c" style="top:649.87px;right:367.20px">18.77468</span>
<span class="t c" style="top:649.87px;right:321.60px">15</span>
<span class="t c" style="top:649.87px;right:276.00px">-1</span>
<span class="t c" style="top:664.15px;right:412.80px">2.591129</span>
<span class="t c" style="top:664.15px;right:367.20px">17.62334</span>
<span class="t c" style="top:664.15px;right:321.60px">14</span>
<span class="t c" style="top:664.15px;right:276.00px">0</span>
<span class="t c" style="top:678.43px;right:412.80px">7.197056</span>
<span class="t c" style="top:678.43px;right:367.20px">19.14827</span>
<span class="t c" style="top:678.43px;right:321.60px">14</span>
<span class="t c" style="top:678.43px;right:276.00px">0</span>
<span class="t c" style="top:692.71px;right:412.80px">9.631272</span>
<span class="t c" style="top:692.71px;right:367.20px">19.25793</span>
<span class="t c" style="top:692.71px;right:321.60px">14</span>
<span class="t c" style="top:692.71px;right:276.00px">0</span>
<div class="b " style="left:154.40px;top:159.60px;width:2.00px;height:546.00px;background:#217346"></div>
<div class="b " style="left:199.40px;top:159.60px;width:2.00px;height:546.00px;background:#217346"></div>
<div class="b " style="left:154.40px;top:159.60px;width:46.60px;height:1.60px;background:#217346"></div>
<div class="b " style="left:197.60px;top:160.00px;width:3.60px;height:3.40px;background:#217346"></div>
</div>
<div class="sec sheetbar">
<div class="b " style="left:0.00px;top:705.00px;width:475.00px;height:20.40px;background:#e6e6e6"></div>
<div class="b " style="left:0.00px;top:704.60px;width:475.00px;height:1.00px;background:#bdbdbd"></div>
<div class="b " style="left:71.40px;top:705.00px;width:37.60px;height:17.00px;background:#fff"></div>
<div class="b " style="left:71.40px;top:721.20px;width:37.60px;height:1.80px;background:#217346"></div>
<span class="t" style="top:709.75px;font-size:9.80px;color:#217346;font-weight:bold;-webkit-text-stroke:0px currentColor;letter-spacing:0.089px;left:79.36px">topo</span>
<svg class="b" style="left:19.40px;top:711.80px;" width="3.4" height="5.6" viewBox="0 0 3.4 5.6"><path d="M3.2 0.2 V5.4 L0.4 2.8 Z" fill="#c4c4c4"/></svg>
<svg class="b" style="left:39.40px;top:711.80px;" width="3.4" height="5.6" viewBox="0 0 3.4 5.6"><path d="M0.2 0.2 V5.4 L3 2.8 Z" fill="#c4c4c4"/></svg>
<svg class="b" style="left:132.60px;top:708.80px;" width="11.4" height="11.4" viewBox="0 0 11.4 11.4"><circle cx="5.7" cy="5.7" r="4.9" fill="none" stroke="#777" stroke-width="0.9"/><path d="M5.7 3 V8.4 M3 5.7 H8.4" stroke="#777" stroke-width="0.9"/></svg>
<div class="b " style="left:0.00px;top:725.20px;width:475.00px;height:16.00px;background:#f3f2f1"></div>
<div class="b " style="left:0.00px;top:724.60px;width:475.00px;height:1.00px;background:#d6d6d6"></div>
<svg class="b" style="left:5.40px;top:728.40px;" width="11" height="9.6" viewBox="0 0 11 9.6"><path d="M0.5 2 H10 V4.4 M0.5 2 V9 H5.4 M0.5 0.6 H10 M2.6 2 V9" fill="none" stroke="#666" stroke-width="0.9"/><circle cx="8" cy="6.8" r="2.5" fill="#f3f2f1" stroke="#555" stroke-width="0.9"/><circle cx="8" cy="6.8" r="0.9" fill="#444"/></svg>
</div>
<div class="sec popups">
<div class="b pop" style="left:202.40px;top:100.00px;width:188px;height:39px"><div class="b " style="left:2.70px;top:3.00px;width:45.00px;height:16.60px;background:#fff;border:1px solid #cfcfcf;box-sizing:border-box"></div>
<div class="b " style="left:48.30px;top:3.00px;width:32.80px;height:16.60px;background:#fff;border:1px solid #cfcfcf;box-sizing:border-box"></div>
<span class="t" style="top:6.27px;font-size:8.60px;letter-spacing:0.096px;left:4.44px">Calibri</span>
<svg class="b" style="left:40.50px;top:9.40px;" width="6.2" height="4.4" viewBox="0 0 6.2 4.4"><path d="M1 1 L3.1 3.4 L5.2 1" fill="none" stroke="#444" stroke-width="1"/></svg>
<span class="t" style="top:6.27px;font-size:8.60px;left:50.40px">11</span>
<svg class="b" style="left:73.00px;top:9.40px;" width="6.2" height="4.4" viewBox="0 0 6.2 4.4"><path d="M1 1 L3.1 3.4 L5.2 1" fill="none" stroke="#444" stroke-width="1"/></svg>
<span class="t" style="top:4.66px;font-size:14.40px;color:#666;-webkit-text-stroke:0px currentColor;left:82.80px">A</span>
<svg class="b" style="left:90.40px;top:6.60px;" width="5" height="4" viewBox="0 0 5 4"><path d="M0.6 3.2 L2.4 1 L4.2 3.2" fill="none" stroke="#2b88d8" stroke-width="1"/></svg>
<span class="t" style="top:6.52px;font-size:12.20px;color:#666;-webkit-text-stroke:0px currentColor;left:99.20px">A</span>
<svg class="b" style="left:106.20px;top:6.60px;" width="5" height="4" viewBox="0 0 5 4"><path d="M0.6 0.8 L2.4 3 L4.2 0.8" fill="none" stroke="#2b88d8" stroke-width="1"/></svg>
<svg class="b" style="left:114.50px;top:6.60px;" width="12" height="10.5" viewBox="0 0 12 10.5"><rect x="0.4" y="1" width="10.4" height="6.2" fill="#fff" stroke="#5a5a5a" stroke-width="0.8"/><circle cx="5.6" cy="4.1" r="1.7" fill="none" stroke="#5a5a5a" stroke-width="0.7"/><path d="M2 2.4 V5.8 M9 2.4 V5.8" stroke="#5a5a5a" stroke-width="0.6"/><rect x="6.2" y="4.2" width="5.6" height="5.8" rx="0.8" fill="#e8761a"/><path d="M7.2 6 H10.8 M7.2 7.2 H10.8 M7.2 8.4 H10.8" stroke="#fff" stroke-width="0.6"/></svg>
<svg class="b" style="left:129.60px;top:9.40px;" width="6.2" height="4.4" viewBox="0 0 6.2 4.4"><path d="M1 1 L3.1 3.4 L5.2 1" fill="none" stroke="#444" stroke-width="1"/></svg>
<span class="t" style="top:5.21px;font-size:13.40px;color:#555;-webkit-text-stroke:0px currentColor;left:141.00px">%</span>
<svg class="b" style="left:159.30px;top:7.40px;" width="6.5" height="8.5" viewBox="0 0 6.5 8.5"><path d="M3 0.2 C5.2 0.2 6.2 1.8 6 3.6 C5.8 5.8 4 7.6 1.6 8.2 L1.3 7.5 C2.8 6.8 3.6 5.8 3.6 4.9 C1.8 5.1 0.6 4 0.6 2.6 C0.6 1.2 1.7 0.2 3 0.2 Z" fill="#444"/></svg>
<svg class="b" style="left:171.40px;top:5.40px;" width="12.2" height="11.4" viewBox="0 0 10.8 10.8"><rect x="0.5" y="0.5" width="9.8" height="9.8" fill="#fff" stroke="#555" stroke-width="0.9"/><path d="M0.5 2.9 H10.3 M0.5 7.9 H10.3 M3.6 0.5 V2.9 M7.2 0.5 V2.9 M3.6 7.9 V10.3 M7.2 7.9 V10.3" stroke="#777" stroke-width="0.7"/><rect x="0.6" y="3.1" width="9.6" height="4.6" fill="#cfe6f8" stroke="#2b88d8" stroke-width="0.7"/><path d="M1.8 5.4 H9 M3.2 4 L1.8 5.4 L3.2 6.8 M7.6 4 L9 5.4 L7.6 6.8" fill="none" stroke="#1f7bd0" stroke-width="1"/></svg>
<span class="t" style="top:23.39px;font-size:9.40px;color:#333;font-weight:bold;left:7.80px">B</span>
<span class="t" style="top:23.02px;font-size:10.20px;color:#333;font-style:italic;font-family:'Liberation Serif',serif;left:24.20px">I</span>
<svg class="b" style="left:36.50px;top:23.00px;" width="12" height="12" viewBox="0 0 12 12"><path d="M0 0.5 H10 M1.8 3.5 H8.2 M0 6.5 H10 M1.8 9.5 H8.2" stroke="#4a4a4a" stroke-width="1" fill="none"/></svg>
<svg class="b" style="left:51.60px;top:22.60px;" width="12" height="11.5" viewBox="0 0 12 11.5"><path d="M4.6 0.8 L9.2 5.2 L5.4 8.6 L1.2 4.6 Z" fill="#fff" stroke="#505050" stroke-width="0.9"/><path d="M8.6 2.6 C10.2 3.2 10.6 5 10.2 6.6" fill="none" stroke="#2b78c8" stroke-width="1.2"/><rect x="0" y="9" width="12" height="2.5" fill="#ffef00"/></svg>
<svg class="b" style="left:66.60px;top:26.20px;" width="6.2" height="4.4" viewBox="0 0 6.2 4.4"><path d="M1 1 L3.1 3.4 L5.2 1" fill="none" stroke="#444" stroke-width="1"/></svg>
<span class="t" style="top:22.07px;font-size:11.20px;left:80.30px">A</span>
<div class="b " style="left:78.00px;top:31.60px;width:11.60px;height:2.50px;background:#f00000"></div>
<svg class="b" style="left:93.00px;top:26.20px;" width="6.2" height="4.4" viewBox="0 0 6.2 4.4"><path d="M1 1 L3.1 3.4 L5.2 1" fill="none" stroke="#444" stroke-width="1"/></svg>
<svg class="b" style="left:104.50px;top:22.80px;" width="11" height="11.5" viewBox="0 0 11 11.5"><rect x="0.5" y="0.5" width="10" height="10" fill="#fff" stroke="#b0b0b0" stroke-width="0.9"/><path d="M5.5 0.5 V10.5 M0.5 5.5 H10.5" stroke="#b0b0b0" stroke-width="0.9"/><path d="M0 10.7 H11" stroke="#444" stroke-width="1.5"/></svg>
<svg class="b" style="left:119.60px;top:26.20px;" width="6.2" height="4.4" viewBox="0 0 6.2 4.4"><path d="M1 1 L3.1 3.4 L5.2 1" fill="none" stroke="#444" stroke-width="1"/></svg>
<svg class="b" style="left:130.40px;top:23.00px;" width="11.5" height="11" viewBox="0 0 11.5 11"><text x="6.6" y="5" font-size="6.2" font-family="Liberation Sans,sans-serif" fill="#777">0</text><text x="2.2" y="10.8" font-size="6.2" font-family="Liberation Sans,sans-serif" fill="#777">.00</text><path d="M0.4 2.8 H4.6 M2 1.2 L0.4 2.8 L2 4.4" fill="none" stroke="#2b88d8" stroke-width="1"/></svg>
<svg class="b" style="left:146.40px;top:23.00px;" width="11.5" height="11" viewBox="0 0 11.5 11"><text x="2.2" y="5" font-size="6.2" font-family="Liberation Sans,sans-serif" fill="#777">.00</text><text x="5.8" y="10.8" font-size="6.2" font-family="Liberation Sans,sans-serif" fill="#777">.0</text><path d="M0.4 8.4 H4.6 M3 6.8 L4.6 8.4 L3 10" fill="none" stroke="#2b88d8" stroke-width="1"/></svg>
<svg class="b" style="left:162.60px;top:22.20px;" width="12" height="11.5" viewBox="0 0 12 11.5"><path d="M0.7 6.2 L5.6 2.6 L8.6 7.6 L4.2 10.8 Z" fill="#f6b46a" stroke="#e07a14" stroke-width="1" stroke-linejoin="round"/><path d="M2.6 8.4 L6.6 5.4" stroke="#e07a14" stroke-width="0.7"/><path d="M5.8 2.4 L7.6 1.2 L10.4 5.8 L8.6 7.2" fill="#fff" stroke="#555" stroke-width="0.8"/><path d="M8.4 2.4 L10.6 0.6 L11.6 1.8 L9.6 4.2" fill="#888" stroke="#555" stroke-width="0.8"/></svg>
</div>
<div class="b pop" style="left:202.90px;top:151.00px;width:106.20px;height:250.00px"><div class="b " style="left:1.40px;top:128.00px;width:103.40px;height:19.60px;background:#d0cecc"></div>
<svg class="b" style="left:11.00px;top:5.60px;" width="7.6" height="10.925" viewBox="0 0 8 11.5"><path d="M1.6 0.3 L5.6 8.2 M6.4 0.3 L2.4 8.2" stroke="#505050" stroke-width="0.95" fill="none"/><circle cx="1.9" cy="9.6" r="1.35" fill="none" stroke="#2b88d8" stroke-width="0.95"/><circle cx="6.1" cy="9.6" r="1.35" fill="none" stroke="#2b88d8" stroke-width="0.95"/></svg>
<span class="t" style="top:7.27px;font-size:8.60px;color:#2b2b2b;letter-spacing:0.214px;left:26.54px">Cu<u>t</u></span>
<svg class="b" style="left:9.40px;top:24.20px;" width="12" height="11.5" viewBox="0 0 12 11.5"><path d="M3.6 9.2 H0.6 V0.6 H5.2 L6.6 2.0" fill="none" stroke="#505050" stroke-width="0.95"/><path d="M4.4 2.9 H9.0 L11.4 5.2 V10.9 H4.4 Z" fill="#fff" stroke="#505050" stroke-width="0.95"/><path d="M7 7.2 H9 M7 8.8 H9" stroke="#505050" stroke-width="0.7"/></svg>
<span class="t" style="top:27.27px;font-size:8.60px;color:#2b2b2b;letter-spacing:0.113px;left:26.54px"><u>C</u>opy</span>
<svg class="b" style="left:10.00px;top:43.80px;" width="11.4" height="12.6" viewBox="0 0 19 21.5"><path d="M7 3.2 H1 V18.2 H8.5" fill="none" stroke="#e8821e" stroke-width="1.3"/><path d="M12.5 3.2 H14.6 V7.5" fill="none" stroke="#e8821e" stroke-width="1.3"/><path d="M4.6 4.6 V3 H6.2 C6.2 0.4 9.4 0.4 9.4 3 H11 V4.6 Z" fill="none" stroke="#5a5a5a" stroke-width="1"/><rect x="9.2" y="8.2" width="8.8" height="12.3" rx="0.8" fill="#fff" stroke="#5a5a5a" stroke-width="1.1"/></svg>
<span class="t" style="top:47.97px;font-size:8.60px;color:#222;font-weight:bold;letter-spacing:-0.223px;left:26.94px">Paste Options:</span>
<svg class="b" style="left:28.00px;top:64.60px;" width="15.4" height="17.4" viewBox="0 0 19 21.5"><path d="M7 3.2 H1 V18.2 H8.5" fill="none" stroke="#e8821e" stroke-width="1.3"/><path d="M12.5 3.2 H14.6 V7.5" fill="none" stroke="#e8821e" stroke-width="1.3"/><path d="M4.6 4.6 V3 H6.2 C6.2 0.4 9.4 0.4 9.4 3 H11 V4.6 Z" fill="none" stroke="#5a5a5a" stroke-width="1"/><rect x="9.2" y="8.2" width="8.8" height="12.3" rx="0.8" fill="#fff" stroke="#5a5a5a" stroke-width="1.1"/></svg>
<span class="t" style="top:91.67px;font-size:8.60px;color:#2b2b2b;letter-spacing:-0.294px;left:26.54px">Paste <u>S</u>pecial...</span>
<div class="b " style="left:24.00px;top:106.20px;width:81.20px;height:1.00px;background:#e5e3e1"></div>
<span class="t" style="top:113.97px;font-size:8.60px;color:#2b2b2b;letter-spacing:0.005px;left:26.54px"><u>I</u>nsert</span>
<span class="t" style="top:133.97px;font-size:8.60px;color:#2b2b2b;letter-spacing:-0.055px;left:26.54px"><u>D</u>elete</span>
<span class="t" style="top:153.97px;font-size:8.60px;color:#2b2b2b;letter-spacing:-0.058px;left:26.54px">Clear Co<u>n</u>tents</span>
<div class="b " style="left:24.00px;top:168.30px;width:81.20px;height:1.00px;background:#e5e3e1"></div>
<svg class="b" style="left:10.20px;top:173.60px;" width="9" height="11.5" viewBox="0 0 9 11.5"><rect x="0.5" y="0.5" width="7.8" height="10.2" fill="#fff" stroke="#505050" stroke-width="0.9"/><path d="M2.2 3.2 H3.4 M4.4 3.2 H6.6 M2.2 5.6 H3.4 M4.4 5.6 H6.6 M2.2 8 H3.4 M4.4 8 H6.6" stroke="#505050" stroke-width="0.8"/></svg>
<span class="t" style="top:175.77px;font-size:8.60px;color:#2b2b2b;letter-spacing:-0.123px;left:26.54px"><u>F</u>ormat Cells...</span>
<span class="t" style="top:195.77px;font-size:8.60px;color:#2b2b2b;letter-spacing:0.058px;left:26.54px">Column <u>W</u>idth...</span>
<span class="t" style="top:215.77px;font-size:8.60px;color:#2b2b2b;letter-spacing:0.211px;left:26.54px"><u>H</u>ide</span>
<span class="t" style="top:235.77px;font-size:8.60px;color:#2b2b2b;letter-spacing:0.130px;left:26.54px"><u>U</u>nhide</span>
</div>
<svg class="b" style="left:276.00px;top:288.60px;" width="9.5" height="14" viewBox="0 0 9.5 14"><path d="M0.6 0.6 V11 L3 8.8 L4.8 13 L6.6 12.2 L4.8 8.2 H8.2 Z" fill="#fff" stroke="#111" stroke-width="0.9" stroke-linejoin="round"/></svg>
</div>
</div>

</body></html>
